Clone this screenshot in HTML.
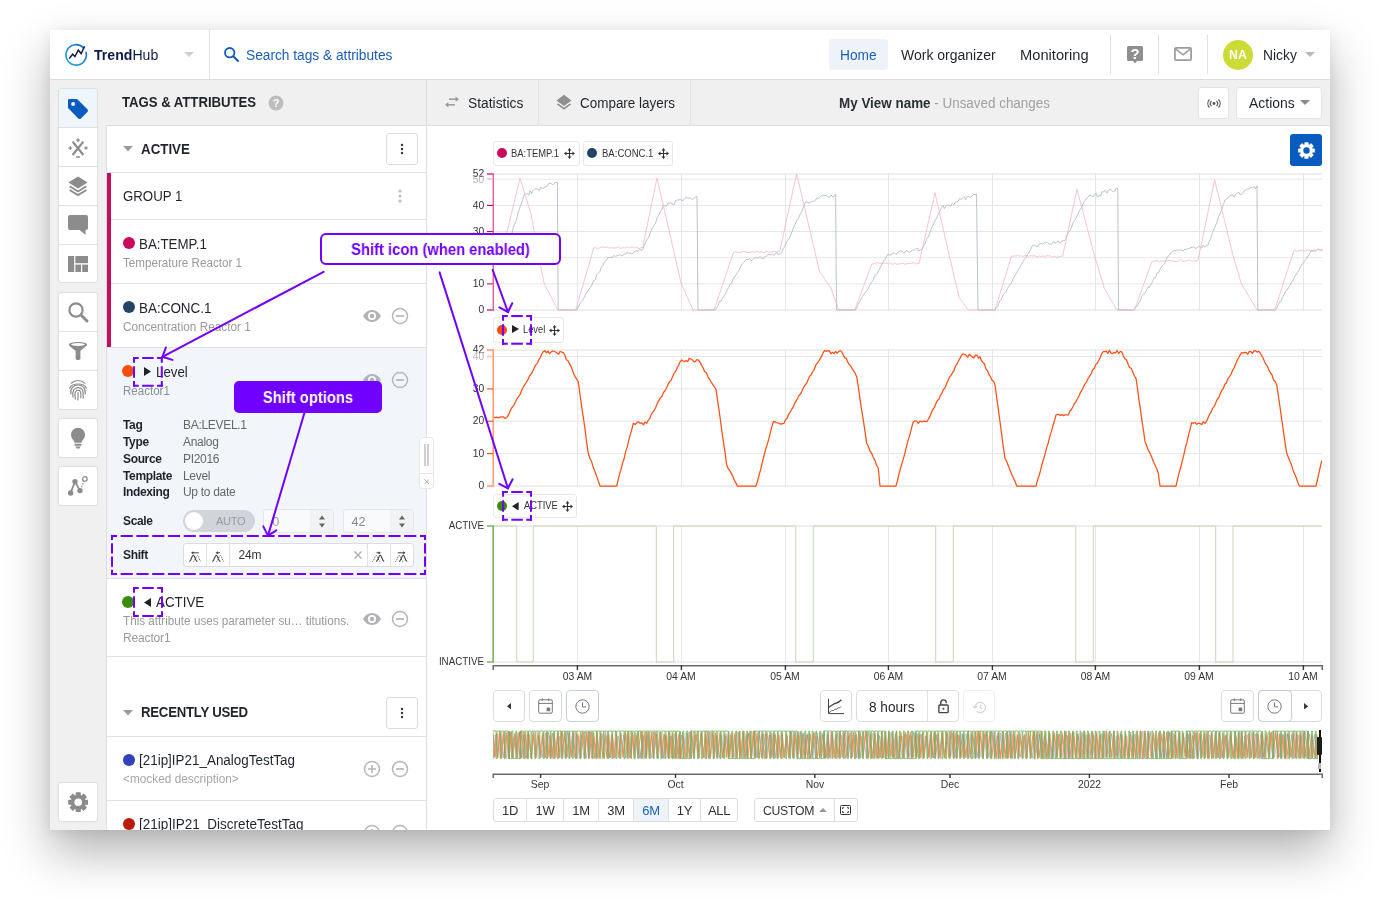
<!DOCTYPE html>
<html lang="en">
<head>
<meta charset="utf-8">
<title>TrendHub - Shift options</title>
<style>
*{box-sizing:border-box;margin:0;padding:0}
html,body{width:1380px;height:900px;overflow:hidden;background:#fff}
body{position:relative;font-family:"Liberation Sans",sans-serif;color:#1f242b;font-size:14px}
.abs{position:absolute}
.shadow{position:absolute;left:50px;top:30px;width:1280px;height:800px;background:#fff;box-shadow:0 22px 45px rgba(0,0,0,.30),0 2px 12px rgba(0,0,0,.07)}
.win{position:absolute;left:50px;top:30px;width:1280px;height:800px;overflow:hidden;background:#fff}
.in{position:absolute;left:-50px;top:-30px;width:1380px;height:900px;will-change:transform}
.t{position:absolute;white-space:nowrap;line-height:20px;height:20px}
.b{font-weight:bold}
.g{color:#999}
.box{position:absolute;background:#fff;border:1px solid #dcdcdc;border-radius:3px}
.ln{position:absolute;background:#e0e0e0}
.dot{position:absolute;width:12px;height:12px;border-radius:50%}
.sb{position:absolute;left:58px;width:40px;background:#fff;border:1px solid #dfdfdf;border-radius:3px}
.sbl{position:absolute;left:58px;width:40px;height:1px;background:#dfdfdf}
svg{display:block}
.ico{position:absolute}
.yl{position:absolute;white-space:nowrap;font-size:10.3px;line-height:12px;height:12px;text-align:right;width:60px;color:#333}
.xl{position:absolute;white-space:nowrap;font-size:10.4px;line-height:12px;height:12px;text-align:center;width:60px;color:#333}
.rb{position:absolute;top:798.8px;height:23px;line-height:23px;font-size:13px;text-align:center;color:#333;letter-spacing:-.3px}
</style>
</head>
<body>
<div class="shadow"></div>
<div class="win"><div class="in">
<!-- ===== top header ===== -->
<div class="abs" style="left:50px;top:30px;width:1280px;height:49px;background:#fff"></div>
<div class="ln" style="left:50px;top:79px;width:1280px;height:1px;background:#dcdcdc"></div>
<div class="ln" style="left:209px;top:30px;width:1px;height:49px;background:#e2e2e2"></div>
<svg class="ico" style="left:64px;top:42.5px" width="24" height="24" viewBox="0 0 24 24" fill="none">
 <defs><linearGradient id="lg" x1="0" y1="1" x2="1" y2="0"><stop offset="0" stop-color="#19a9dd"/><stop offset="1" stop-color="#1467c8"/></linearGradient></defs>
 <path d="M19.6 4.9A10.2 10.2 0 1 0 22 9.2" stroke="url(#lg)" stroke-width="1.6" stroke-linecap="round"/>
 <path d="M5.2 15.6L8.6 11.2L10.9 13.6L14.3 7.2L17.2 10.6L20.6 3.2" stroke="#151a4a" stroke-width="1.5" stroke-linejoin="miter"/>
</svg>
<div class="t" id="logo" style="left:94px;top:45px;font-size:15px;color:#0d1b4c;letter-spacing:0.00px;transform:scaleX(0.940);transform-origin:0 50%"><span class="b">Trend</span><span>Hub</span></div>
<svg class="ico" style="left:184px;top:52px" width="10" height="5" viewBox="0 0 10 5"><path d="M0 0H10L5 5Z" fill="#d0d0d0"/></svg>
<svg class="ico" style="left:223px;top:46px" width="17" height="17" viewBox="0 0 17 17" fill="none"><circle cx="6.7" cy="6.7" r="4.7" stroke="#0d5cb6" stroke-width="1.8"/><path d="M10.3 10.3L15 15" stroke="#0d5cb6" stroke-width="2" stroke-linecap="round"/></svg>
<div class="t" id="search" style="left:246px;top:45px;font-size:14px;color:#1b5fb5;letter-spacing:0.00px;transform:scaleX(0.980);transform-origin:0 50%">Search tags &amp; attributes</div>

<div class="abs" style="left:829px;top:39px;width:59px;height:31px;background:#eef3fa;border-radius:3px"></div>
<div class="t" id="nav1" style="left:840px;top:44.8px;font-size:14px;color:#1b5fb5;letter-spacing:0.00px;transform:scaleX(0.980);transform-origin:0 50%">Home</div>
<div class="t" id="nav2" style="left:901px;top:44.8px;font-size:14px;letter-spacing:0.00px;transform:scaleX(0.999);transform-origin:0 50%">Work organizer</div>
<div class="t" id="nav3" style="left:1020px;top:44.8px;font-size:14px;letter-spacing:0.00px;transform:scaleX(1.049);transform-origin:0 50%">Monitoring</div>
<div class="ln" style="left:1110px;top:35px;width:1px;height:39px"></div>
<div class="ln" style="left:1158px;top:35px;width:1px;height:39px"></div>
<div class="ln" style="left:1207px;top:35px;width:1px;height:39px"></div>
<!-- help icon -->
<svg class="ico" style="left:1127px;top:46px" width="16" height="18" viewBox="0 0 16 18"><path d="M1.5 0H14.5A1.5 1.5 0 0 1 16 1.5V13.5A1.5 1.5 0 0 1 14.5 15H10L8 17.5L6 15H1.5A1.5 1.5 0 0 1 0 13.5V1.5A1.5 1.5 0 0 1 1.5 0Z" fill="#8f8f8f"/><text x="8" y="13" font-family="Liberation Sans, sans-serif" font-weight="bold" font-size="15" fill="#fff" text-anchor="middle">?</text></svg>
<!-- mail icon -->
<svg class="ico" style="left:1174px;top:47px" width="18" height="14" viewBox="0 0 18 14" fill="none"><rect x=".9" y=".9" width="16.2" height="12.2" rx="1.2" stroke="#9a9a9a" stroke-width="1.7"/><path d="M1.5 1.8L9 7.8L16.5 1.8" stroke="#9a9a9a" stroke-width="1.6"/></svg>
<div class="abs" style="left:1223px;top:39.5px;width:30px;height:30px;border-radius:50%;background:#cddb37"></div>
<div class="t b" style="left:1223px;top:45px;width:30px;text-align:center;font-size:12.3px;color:#fff;letter-spacing:0">NA</div>
<div class="t" id="nicky" style="left:1263px;top:44.8px;font-size:14px;letter-spacing:0.00px;transform:scaleX(0.990);transform-origin:0 50%">Nicky</div>
<svg class="ico" style="left:1305px;top:52px" width="10" height="5" viewBox="0 0 10 5"><path d="M0 0H10L5 5Z" fill="#b8b8b8"/></svg>
<!-- ===== grey background for toolbar row + sidebar ===== -->
<div class="abs" style="left:50px;top:80px;width:1280px;height:46px;background:#f0f0f0"></div>
<div class="abs" style="left:50px;top:80px;width:57px;height:750px;background:#f0f0f0"></div>
<!-- sidebar groups -->
<div class="sb" style="top:88px;height:195px"></div>
<div class="abs" style="left:59px;top:89px;width:38px;height:38px;background:#eef5fb;border-radius:2px 2px 0 0"></div>
<div class="sbl" style="top:127px"></div><div class="sbl" style="top:166px"></div><div class="sbl" style="top:205px"></div><div class="sbl" style="top:244px"></div>
<!-- tag -->
<svg class="ico" style="left:67px;top:98px" width="22" height="22" viewBox="0 0 22 22"><path d="M2.2 1H9.3A1.8 1.8 0 0 1 10.6 1.55L20.4 11.3A1.8 1.8 0 0 1 20.4 13.9L13.9 20.4A1.8 1.8 0 0 1 11.3 20.4L1.55 10.6A1.8 1.8 0 0 1 1 9.3V2.2A1.2 1.2 0 0 1 2.2 1Z" fill="#0a5bbf" transform="rotate(0 11 11)"/><circle cx="6.1" cy="6.1" r="2" fill="#eef5fb"/></svg>
<!-- x star -->
<svg class="ico" style="left:67px;top:137px" width="22" height="22" viewBox="0 0 22 22" fill="none" stroke="#8c8c8c"><path d="M5.6 4.6L16.4 18M16.4 4.6L5.6 18" stroke-width="2.2"/><path d="M11 1.2V5M9.1 3.1H12.9M9 20H13M1.4 11.2H5.2M3.3 9.3V13.1M17.6 9.6L20.4 12.4M20.4 9.6L17.6 12.4" stroke-width="1.3"/></svg>
<!-- layers -->
<svg class="ico" style="left:67px;top:175px" width="22" height="22" viewBox="0 0 22 22"><path d="M11 1.6L20.6 7.6L11 13.6L1.4 7.6Z" fill="#8c8c8c"/><path d="M2.6 11.3L11 16.5L19.4 11.3M2.6 14.9L11 20.1L19.4 14.9" stroke="#8c8c8c" stroke-width="1.8" fill="none"/></svg>
<!-- comment -->
<svg class="ico" style="left:68px;top:215px" width="20" height="20" viewBox="0 0 20 20"><path d="M2 0H18A2 2 0 0 1 20 2V13A2 2 0 0 1 18 15H17.5V20L11.5 15H2A2 2 0 0 1 0 13V2A2 2 0 0 1 2 0Z" fill="#8c8c8c"/></svg>
<!-- dashboard -->
<svg class="ico" style="left:68px;top:256px" width="20" height="16" viewBox="0 0 20 16" fill="#8c8c8c"><rect x="0" y="0" width="6.2" height="16"/><rect x="7.4" y="0" width="12.6" height="7.2"/><rect x="7.4" y="8.6" width="5.6" height="7.4"/><rect x="14.2" y="8.6" width="5.8" height="7.4"/></svg>

<div class="sb" style="top:292px;height:118px"></div>
<div class="sbl" style="top:331px"></div><div class="sbl" style="top:370px"></div>
<!-- search -->
<svg class="ico" style="left:67px;top:301px" width="22" height="22" viewBox="0 0 22 22" fill="none"><circle cx="9" cy="9" r="6.6" stroke="#8c8c8c" stroke-width="2.2"/><path d="M14 14L20 20" stroke="#8c8c8c" stroke-width="3" stroke-linecap="round"/></svg>
<!-- funnel -->
<svg class="ico" style="left:68px;top:341px" width="20" height="20" viewBox="0 0 20 20"><path d="M1 3.6C1 1.9 5 .9 10 .9S19 1.9 19 3.6C19 5 17 6.2 12.4 10V17.6C12.4 18.6 11.6 19 10.8 19H9.2C8.4 19 7.6 18.6 7.6 17.6V10C3 6.2 1 5 1 3.6Z" fill="#8c8c8c"/><ellipse cx="10" cy="3.5" rx="6.8" ry="1.5" fill="#fff"/></svg>
<!-- fingerprint -->
<svg class="ico" style="left:68px;top:379px" width="20" height="22" viewBox="0 0 20 22" fill="none" stroke="#8c8c8c" stroke-width="1.2" stroke-linecap="round"><path d="M3.2 4.2C7 .6 13 .6 16.8 4.2"/><path d="M1.6 9.2C3.6 3.6 16.4 3.6 18.4 9.2"/><path d="M2.8 15C2 8.8 6 6 10 6S18 8.8 17.2 15"/><path d="M5 18C3.8 12 6.4 8.6 10 8.6S16 11.6 15 16.4"/><path d="M7.4 20C6 14.4 7.4 11.2 10 11.2S13.4 14 12.8 18.6"/><path d="M10 13.6C10.4 16.4 10.2 18.6 9.8 20.8"/><path d="M15 19.2C15.2 18.6 15.4 18 15.4 17.4"/></svg>

<div class="sb" style="top:418px;height:40px"></div>
<!-- bulb -->
<svg class="ico" style="left:70px;top:427px" width="16" height="22" viewBox="0 0 16 22" fill="#8c8c8c"><path d="M8 .8A7 7 0 0 0 1 7.8C1 10.6 2.6 12.2 3.6 13.6C4.2 14.4 4.4 15 4.4 15.8H11.6C11.6 15 11.8 14.4 12.4 13.6C13.4 12.2 15 10.6 15 7.8A7 7 0 0 0 8 .8Z"/><rect x="4.6" y="16.8" width="6.8" height="1.9" rx=".5"/><path d="M5.4 19.6H10.6L9.4 21.4H6.6Z"/></svg>
<div class="sb" style="top:466px;height:40px"></div>
<!-- graph -->
<svg class="ico" style="left:67px;top:475px" width="22" height="22" viewBox="0 0 22 22" fill="none"><path d="M3.6 18L8 6.6L13 15.6" stroke="#8c8c8c" stroke-width="1.8"/><path d="M13.4 15L17.4 5" stroke="#8c8c8c" stroke-width="1.3" stroke-dasharray="1.4 1.6"/><circle cx="3.6" cy="18" r="2.7" fill="#8c8c8c"/><circle cx="8" cy="6.6" r="2.7" fill="#8c8c8c"/><circle cx="13" cy="15.6" r="2.7" fill="#8c8c8c"/><circle cx="17.8" cy="4" r="2.3" stroke="#8c8c8c" stroke-width="1.3" fill="#fff"/></svg>

<div class="sb" style="top:782px;height:40px"></div>
<!-- gear -->
<svg class="ico" style="left:67.8px;top:791.8px" width="20.5" height="20.5" viewBox="-11 -11 22 22"><g fill="#8c8c8c"><circle r="8.1"/><rect x="-2.7" y="-10.8" width="5.4" height="21.6" rx=".8" transform="rotate(0)"/><rect x="-2.7" y="-10.8" width="5.4" height="21.6" rx=".8" transform="rotate(45)"/><rect x="-2.7" y="-10.8" width="5.4" height="21.6" rx=".8" transform="rotate(90)"/><rect x="-2.7" y="-10.8" width="5.4" height="21.6" rx=".8" transform="rotate(135)"/></g><circle r="4.1" fill="#fff"/></svg>
<!-- ===== tags panel ===== -->
<div class="t b" id="ta" style="left:122px;top:92px;font-size:14.7px;letter-spacing:-0.05px;transform:scaleX(0.900);transform-origin:0 50%">TAGS &amp; ATTRIBUTES</div>
<svg class="ico" style="left:268px;top:95px" width="16" height="16" viewBox="0 0 16 16"><circle cx="8" cy="8" r="7.5" fill="#bdbdbd"/><text x="8" y="12" font-family="Liberation Sans, sans-serif" font-weight="bold" font-size="11" fill="#fff" text-anchor="middle">?</text></svg>
<div class="abs" style="left:106px;top:125px;width:321px;height:710px;background:#fff;border:1px solid #dedede"></div>
<!-- ACTIVE header -->
<svg class="ico" style="left:123px;top:146px" width="10" height="6" viewBox="0 0 10 6"><path d="M0 0H10L5 5.5Z" fill="#9a9a9a"/></svg>
<div class="t b" id="h1" style="left:141px;top:139px;font-size:14.7px;letter-spacing:0.00px;transform:scaleX(0.908);transform-origin:0 50%">ACTIVE</div>
<div class="box" style="left:386px;top:133px;width:32px;height:32px"></div>
<svg class="ico" style="left:400px;top:143px" width="4" height="12" viewBox="0 0 4 12" fill="#333"><circle cx="2" cy="2" r="1.2"/><circle cx="2" cy="6" r="1.2"/><circle cx="2" cy="10" r="1.2"/></svg>
<div class="ln" style="left:107px;top:172px;width:319px;height:1px"></div>
<!-- group bar -->
<div class="abs" style="left:107px;top:173px;width:4px;height:175px;background:#c70d5e"></div>
<div class="t" id="g1" style="left:123px;top:186px;font-size:14.7px;letter-spacing:0.00px;transform:scaleX(0.902);transform-origin:0 50%">GROUP 1</div>
<svg class="ico" style="left:398px;top:189px" width="4" height="14" viewBox="0 0 4 14" fill="#bdbdbd"><circle cx="2" cy="2" r="1.5"/><circle cx="2" cy="7" r="1.5"/><circle cx="2" cy="12" r="1.5"/></svg>
<div class="ln" style="left:111px;top:219px;width:315px;height:1px"></div>
<!-- BA:TEMP.1 -->
<div class="dot" style="left:123px;top:237px;background:#c8095c"></div>
<div class="t" id="r1" style="left:139px;top:233.5px;font-size:14.7px;letter-spacing:0.00px;transform:scaleX(0.906);transform-origin:0 50%">BA:TEMP.1</div>
<div class="t g" id="r1s" style="left:123px;top:252.5px;font-size:12px;letter-spacing:0.00px;transform:scaleX(0.970);transform-origin:0 50%">Temperature Reactor 1</div>
<div class="ln" style="left:111px;top:283px;width:315px;height:1px"></div>
<!-- BA:CONC.1 -->
<div class="dot" style="left:123px;top:301px;background:#244466"></div>
<div class="t" id="r2" style="left:139px;top:297.5px;font-size:14.7px;letter-spacing:0.00px;transform:scaleX(0.916);transform-origin:0 50%">BA:CONC.1</div>
<div class="t g" id="r2s" style="left:123px;top:316.5px;font-size:12px;letter-spacing:0.00px;transform:scaleX(0.982);transform-origin:0 50%">Concentration Reactor 1</div>
<svg class="ico eye" style="left:363px;top:309px" width="18" height="14" viewBox="0 0 18 14"><path d="M9 1C4.8 1 1.6 4 0 7C1.6 10 4.8 13 9 13S16.4 10 18 7C16.4 4 13.2 1 9 1Z" fill="#b1b3b6"/><circle cx="9" cy="7" r="4" fill="#fff"/><circle cx="9" cy="7" r="2.3" fill="#b1b3b6"/></svg>
<svg class="ico" style="left:391px;top:307px" width="18" height="18" viewBox="0 0 18 18" fill="none" stroke="#b5b7ba" stroke-width="1.5"><circle cx="9" cy="9" r="7.5"/><path d="M5 9H13" stroke-width="1.8"/></svg>
<div class="ln" style="left:107px;top:347px;width:319px;height:1px"></div>
<!-- Level (expanded) -->
<div class="abs" style="left:107px;top:348px;width:319px;height:230px;background:#f2f6fb"></div>
<div class="dot" style="left:122px;top:365px;background:#fb4c0f"></div>
<div class="abs" style="left:134px;top:358px;width:28px;height:27px;background:#f2f6fb"></div>
<svg class="ico" style="left:144px;top:367px" width="7" height="9" viewBox="0 0 7 9"><path d="M0 0L7 4.5L0 9Z" fill="#222"/></svg>
<div class="t" id="r3" style="left:155.5px;top:361.5px;font-size:14px;letter-spacing:0.00px;transform:scaleX(0.950);transform-origin:0 50%">Level</div>
<div class="t" id="r3s" style="left:123px;top:380.5px;font-size:12px;color:#8a8f98;letter-spacing:0.00px;transform:scaleX(0.961);transform-origin:0 50%">Reactor1</div>
<svg class="ico eye" style="left:363px;top:373px" width="18" height="14" viewBox="0 0 18 14"><path d="M9 1C4.8 1 1.6 4 0 7C1.6 10 4.8 13 9 13S16.4 10 18 7C16.4 4 13.2 1 9 1Z" fill="#b1b3b6"/><circle cx="9" cy="7" r="4" fill="#f2f6fb"/><circle cx="9" cy="7" r="2.3" fill="#b1b3b6"/></svg>
<svg class="ico" style="left:391px;top:371px" width="18" height="18" viewBox="0 0 18 18" fill="none" stroke="#b5b7ba" stroke-width="1.5"><circle cx="9" cy="9" r="7.5"/><path d="M5 9H13" stroke-width="1.8"/></svg>

<div class="t b kv" style="left:123px;top:415px;font-size:12px;letter-spacing:-.35px">Tag</div><div class="t kv" style="left:183px;top:415px;font-size:12px;color:#666;letter-spacing:-.3px">BA:LEVEL.1</div>
<div class="t b kv" style="left:123px;top:432px;font-size:12px;letter-spacing:-.35px">Type</div><div class="t kv" style="left:183px;top:432px;font-size:12px;color:#666;letter-spacing:-.3px">Analog</div>
<div class="t b kv" style="left:123px;top:449px;font-size:12px;letter-spacing:-.35px">Source</div><div class="t kv" style="left:183px;top:449px;font-size:12px;color:#666;letter-spacing:-.3px">PI2016</div>
<div class="t b kv" style="left:123px;top:466px;font-size:12px;letter-spacing:-.35px">Template</div><div class="t kv" style="left:183px;top:466px;font-size:12px;color:#666;letter-spacing:-.3px">Level</div>
<div class="t b kv" style="left:123px;top:482px;font-size:12px;letter-spacing:-.35px">Indexing</div><div class="t kv" style="left:183px;top:482px;font-size:12px;color:#666;letter-spacing:-.3px">Up to date</div>

<div class="t b" style="left:123px;top:511px;font-size:12px;letter-spacing:-.35px">Scale</div>
<div class="abs" style="left:183px;top:509.5px;width:72px;height:22.4px;border-radius:11.2px;background:#d1d4db"></div>
<div class="abs" style="left:185.2px;top:511.7px;width:18px;height:18px;border-radius:50%;background:#fff"></div>
<div class="t" style="left:216px;top:511px;font-size:11px;color:#9a9a9a;letter-spacing:-.3px">AUTO</div>
<div class="abs" style="left:263.3px;top:509.2px;width:70.7px;height:23.4px;background:#f9fafb;border:1px solid #e6e7ea;border-radius:3px"></div>
<div class="abs" style="left:310px;top:510.2px;width:23px;height:21.4px;background:#f1f2f4"></div>
<div class="t" style="left:272.3px;top:512px;font-size:12.6px;color:#999">0</div>
<svg class="ico" style="left:318.5px;top:514.5px" width="6" height="13" viewBox="0 0 7 14" fill="#666"><path d="M3.5 0L7 4.6H0Z"/><path d="M3.5 14L7 9.4H0Z"/></svg>
<div class="abs" style="left:343px;top:509.2px;width:71px;height:23.4px;background:#f9fafb;border:1px solid #e6e7ea;border-radius:3px"></div>
<div class="abs" style="left:390px;top:510.2px;width:23px;height:21.4px;background:#f1f2f4"></div>
<div class="t" style="left:351.5px;top:512px;font-size:12.6px;color:#888;letter-spacing:-.1px">42</div>
<svg class="ico" style="left:398.5px;top:514.5px" width="6" height="13" viewBox="0 0 7 14" fill="#666"><path d="M3.5 0L7 4.6H0Z"/><path d="M3.5 14L7 9.4H0Z"/></svg>

<div class="t b" style="left:123px;top:545px;font-size:12px;letter-spacing:-.35px">Shift</div>
<div class="box" style="left:183px;top:543px;width:231px;height:24px;border-color:#dcdde0"></div>
<div class="ln" style="left:206px;top:544px;width:1px;height:22px"></div>
<div class="ln" style="left:229px;top:544px;width:1px;height:22px"></div>
<div class="ln" style="left:367px;top:544px;width:1px;height:22px"></div>
<div class="ln" style="left:390px;top:544px;width:1px;height:22px"></div>
<div class="t" style="left:238.5px;top:545px;font-size:12px;color:#333;letter-spacing:-.2px">24m</div>
<svg class="ico" style="left:354.4px;top:550.8px" width="8" height="8" viewBox="0 0 8 8" stroke="#b0b0b0" stroke-width="1.4"><path d="M.4 .4L7.6 7.6M7.6 .4L.4 7.6"/></svg>
<!-- shift icons -->
<svg class="ico" style="left:188.7px;top:550.6px" width="12.5" height="11" viewBox="0 0 12.5 11" fill="none" stroke="#444"><path d="M.3 10.4C2.4 10.4 2.5 4.4 4.3 4.4S6.2 10.4 8.4 10.4" stroke-width="1.15"/><path d="M4.4 10.4C6.4 10.4 6.6 4.6 8.3 4.6S10.3 10.4 12.2 10.4" stroke-width="1" stroke-dasharray="1.1 1.1"/><path d="M3 1.8H9.8" stroke-width="1"/><path d="M2 1.8L4.4 .2V3.4Z" fill="#444" stroke="none"/></svg>
<svg class="ico" style="left:211.8px;top:550.6px" width="12.5" height="11" viewBox="0 0 12.5 11" fill="none" stroke="#444"><path d="M.3 10.4C2.4 10.4 2.5 4.4 4.3 4.4S6.2 10.4 8.4 10.4" stroke-width="1.15"/><path d="M4.4 10.4C6.4 10.4 6.6 4.6 8.3 4.6S10.3 10.4 12.2 10.4" stroke-width="1" stroke-dasharray="1.1 1.1"/><path d="M5 1.8H8" stroke-width="1"/><path d="M3.6 1.8L6 .2V3.4Z" fill="#444" stroke="none"/></svg>
<svg class="ico" style="left:372.4px;top:550.6px" width="12.5" height="11" viewBox="0 0 12.5 11" fill="none" stroke="#444"><g transform="translate(12.5 0) scale(-1 1)"><path d="M.3 10.4C2.4 10.4 2.5 4.4 4.3 4.4S6.2 10.4 8.4 10.4" stroke-width="1.15"/><path d="M4.4 10.4C6.4 10.4 6.6 4.6 8.3 4.6S10.3 10.4 12.2 10.4" stroke-width="1" stroke-dasharray="1.1 1.1"/><path d="M5 1.8H8" stroke-width="1"/><path d="M3.6 1.8L6 .2V3.4Z" fill="#444" stroke="none"/></g></svg>
<svg class="ico" style="left:395.3px;top:550.6px" width="12.5" height="11" viewBox="0 0 12.5 11" fill="none" stroke="#444"><g transform="translate(12.5 0) scale(-1 1)"><path d="M.3 10.4C2.4 10.4 2.5 4.4 4.3 4.4S6.2 10.4 8.4 10.4" stroke-width="1.15"/><path d="M4.4 10.4C6.4 10.4 6.6 4.6 8.3 4.6S10.3 10.4 12.2 10.4" stroke-width="1" stroke-dasharray="1.1 1.1"/><path d="M3 1.8H9.8" stroke-width="1"/><path d="M2 1.8L4.4 .2V3.4Z" fill="#444" stroke="none"/></g></svg>
<div class="ln" style="left:107px;top:578px;width:319px;height:1px"></div>

<!-- ACTIVE attr row -->
<div class="dot" style="left:122px;top:596px;background:#3a8d0b"></div>
<div class="abs" style="left:134px;top:588px;width:28px;height:28px;background:#fff"></div>
<svg class="ico" style="left:144px;top:597.5px" width="7" height="9" viewBox="0 0 7 9"><path d="M7 0L0 4.5L7 9Z" fill="#222"/></svg>
<div class="t" id="r4" style="left:155.5px;top:592px;font-size:14.7px;letter-spacing:0.00px;transform:scaleX(0.910);transform-origin:0 50%">ACTIVE</div>
<div class="t g" id="r4s" style="left:123px;top:611px;font-size:12px;letter-spacing:0.00px;transform:scaleX(0.975);transform-origin:0 50%">This attribute uses parameter su… titutions.</div>
<div class="t g" style="left:123px;top:627.5px;font-size:12px;letter-spacing:-.15px">Reactor1</div>
<svg class="ico eye" style="left:363px;top:612px" width="18" height="14" viewBox="0 0 18 14"><path d="M9 1C4.8 1 1.6 4 0 7C1.6 10 4.8 13 9 13S16.4 10 18 7C16.4 4 13.2 1 9 1Z" fill="#b1b3b6"/><circle cx="9" cy="7" r="4" fill="#fff"/><circle cx="9" cy="7" r="2.3" fill="#b1b3b6"/></svg>
<svg class="ico" style="left:391px;top:610px" width="18" height="18" viewBox="0 0 18 18" fill="none" stroke="#b5b7ba" stroke-width="1.5"><circle cx="9" cy="9" r="7.5"/><path d="M5 9H13" stroke-width="1.8"/></svg>
<div class="ln" style="left:107px;top:656px;width:319px;height:1px"></div>

<!-- RECENTLY USED -->
<svg class="ico" style="left:123px;top:710px" width="10" height="6" viewBox="0 0 10 6"><path d="M0 0H10L5 5.5Z" fill="#9a9a9a"/></svg>
<div class="t b" id="h2" style="left:141px;top:702px;font-size:14.7px;letter-spacing:-0.28px;transform:scaleX(0.900);transform-origin:0 50%">RECENTLY USED</div>
<div class="box" style="left:386px;top:697px;width:32px;height:32px"></div>
<svg class="ico" style="left:400px;top:707px" width="4" height="12" viewBox="0 0 4 12" fill="#333"><circle cx="2" cy="2" r="1.2"/><circle cx="2" cy="6" r="1.2"/><circle cx="2" cy="10" r="1.2"/></svg>
<div class="ln" style="left:107px;top:736px;width:319px;height:1px"></div>
<div class="dot" style="left:123px;top:754.2px;background:#3341b8"></div>
<div class="t" id="r5" style="left:139px;top:749.8px;font-size:14px;letter-spacing:0.00px;transform:scaleX(0.959);transform-origin:0 50%">[21ip]IP21_AnalogTestTag</div>
<div class="t g" id="r5s" style="left:123px;top:769px;font-size:12px;color:#a6a6a6;letter-spacing:0.00px;transform:scaleX(0.986);transform-origin:0 50%">&lt;mocked description&gt;</div>
<svg class="ico" style="left:363px;top:760px" width="18" height="18" viewBox="0 0 18 18" fill="none" stroke="#b5b7ba" stroke-width="1.5"><circle cx="9" cy="9" r="7.5"/><path d="M5 9H13M9 5V13" stroke-width="1.6"/></svg>
<svg class="ico" style="left:391px;top:760px" width="18" height="18" viewBox="0 0 18 18" fill="none" stroke="#b5b7ba" stroke-width="1.5"><circle cx="9" cy="9" r="7.5"/><path d="M5 9H13" stroke-width="1.8"/></svg>
<div class="ln" style="left:107px;top:800px;width:319px;height:1px"></div>
<div class="dot" style="left:123px;top:818px;background:#b81c0c"></div>
<div class="t" id="r6" style="left:139px;top:813.8px;font-size:14px;letter-spacing:0.00px;transform:scaleX(0.965);transform-origin:0 50%">[21ip]IP21_DiscreteTestTag</div>
<svg class="ico" style="left:363px;top:824px" width="18" height="18" viewBox="0 0 18 18" fill="none" stroke="#b5b7ba" stroke-width="1.5"><circle cx="9" cy="9" r="7.5"/><path d="M5 9H13M9 5V13" stroke-width="1.6"/></svg>
<svg class="ico" style="left:391px;top:824px" width="18" height="18" viewBox="0 0 18 18" fill="none" stroke="#b5b7ba" stroke-width="1.5"><circle cx="9" cy="9" r="7.5"/><path d="M5 9H13" stroke-width="1.8"/></svg>

<!-- ===== chart toolbar ===== -->
<div class="ln" style="left:107px;top:125px;width:1223px;height:1px;background:#dedede"></div>
<div class="ln" style="left:426px;top:80px;width:1px;height:750px;background:#dedede"></div>
<div class="ln" style="left:538px;top:80px;width:1px;height:45px;background:#e2e2e2"></div>
<div class="ln" style="left:690px;top:80px;width:1px;height:45px;background:#e2e2e2"></div>
<svg class="ico" style="left:444px;top:96px" width="16" height="12" viewBox="0 0 16 12" fill="none" stroke="#9a9a9a" stroke-width="1.5"><path d="M5 3.2H12.4"/><path d="M15 3.2L11.6 .6V5.8Z" fill="#9a9a9a" stroke="none"/><path d="M11 8.8H3.6"/><path d="M1 8.8L4.4 6.2V11.4Z" fill="#9a9a9a" stroke="none"/></svg>
<div class="t" id="st" style="left:468px;top:92.6px;font-size:14px;letter-spacing:0.00px;transform:scaleX(0.987);transform-origin:0 50%">Statistics</div>
<svg class="ico" style="left:555.5px;top:93.5px" width="16" height="16.5" viewBox="0 0 20 20.6"><path d="M10 1L19.4 8L10 15L.6 8Z" fill="#8f8f8f"/><path d="M1.8 12.2L10 18.4L18.2 12.2" stroke="#8f8f8f" stroke-width="2" fill="none"/></svg>
<div class="t" id="cl" style="left:580px;top:92.6px;font-size:14px;letter-spacing:0.00px;transform:scaleX(0.961);transform-origin:0 50%">Compare layers</div>
<div class="t" id="vn" style="left:839px;top:92.5px;font-size:14px;letter-spacing:0.00px;transform:scaleX(0.959);transform-origin:0 50%"><span class="b" style="color:#2a2f36">My View name</span><span style="color:#a0a0a0"> - Unsaved changes</span></div>
<div class="box" style="left:1198px;top:87px;width:31px;height:32px;border-color:#e4e4e4"></div>
<svg class="ico" style="left:1206.5px;top:97.5px" width="14" height="11.2" viewBox="0 0 15 12" fill="none" stroke="#555" stroke-width="1.25"><circle cx="7.5" cy="6" r="1.6" fill="#555" stroke="none"/><path d="M4.8 3.2A4 4 0 0 0 4.8 8.8M10.2 3.2A4 4 0 0 1 10.2 8.8M2.6 1.6A6.6 6.6 0 0 0 2.6 10.4M12.4 1.6A6.6 6.6 0 0 1 12.4 10.4"/></svg>
<div class="box" style="left:1236px;top:87px;width:86px;height:32px;border-color:#e4e4e4"></div>
<div class="t" id="ac" style="left:1249px;top:93px;font-size:14px;letter-spacing:0.00px;transform:scaleX(0.995);transform-origin:0 50%">Actions</div>
<svg class="ico" style="left:1300px;top:100px" width="10" height="5" viewBox="0 0 10 5"><path d="M0 0H10L5 5Z" fill="#8a8a8a"/></svg>
<div class="abs" style="left:1290px;top:134px;width:32px;height:32px;background:#0a5bbf;border-radius:3px"></div>
<svg class="ico" style="left:1297.5px;top:141.5px" width="17" height="17" viewBox="-11 -11 22 22"><g fill="#fff"><circle r="8.1"/><rect x="-2.7" y="-10.8" width="5.4" height="21.6" rx=".8" transform="rotate(0)"/><rect x="-2.7" y="-10.8" width="5.4" height="21.6" rx=".8" transform="rotate(45)"/><rect x="-2.7" y="-10.8" width="5.4" height="21.6" rx=".8" transform="rotate(90)"/><rect x="-2.7" y="-10.8" width="5.4" height="21.6" rx=".8" transform="rotate(135)"/></g><circle r="4.1" fill="#0a5bbf"/></svg>

<svg class="abs" style="left:0;top:0" width="1380" height="900" viewBox="0 0 1380 900" fill="none">
<line x1="493" x2="1322" y1="174" y2="174" stroke="#efefef" stroke-width="2"/>
<line x1="493" x2="1322" y1="310" y2="310" stroke="#efefef" stroke-width="2"/>
<line x1="493" x2="1322" y1="179.2" y2="179.2" stroke="#e6e6e8"/>
<line x1="493" x2="1322" y1="205.4" y2="205.4" stroke="#e6e6e8"/>
<line x1="493" x2="1322" y1="231.5" y2="231.5" stroke="#e6e6e8"/>
<line x1="493" x2="1322" y1="257.7" y2="257.7" stroke="#e6e6e8"/>
<line x1="493" x2="1322" y1="283.8" y2="283.8" stroke="#e6e6e8"/>
<line x1="493" x2="1322" y1="350" y2="350" stroke="#efefef" stroke-width="2"/>
<line x1="493" x2="1322" y1="486" y2="486" stroke="#efefef" stroke-width="2"/>
<line x1="493" x2="1322" y1="356.5" y2="356.5" stroke="#e6e6e8"/>
<line x1="493" x2="1322" y1="388.9" y2="388.9" stroke="#e6e6e8"/>
<line x1="493" x2="1322" y1="421.2" y2="421.2" stroke="#e6e6e8"/>
<line x1="493" x2="1322" y1="453.6" y2="453.6" stroke="#e6e6e8"/>
<line x1="493" x2="1322" y1="526" y2="526" stroke="#efefef" stroke-width="2"/>
<line x1="493" x2="1322" y1="662" y2="662" stroke="#efefef" stroke-width="2"/>
<line x1="577.5" x2="577.5" y1="173" y2="311" stroke="#e6e6e8"/>
<line x1="577.5" x2="577.5" y1="349" y2="487" stroke="#e6e6e8"/>
<line x1="577.5" x2="577.5" y1="525" y2="663" stroke="#e6e6e8"/>
<line x1="681.5" x2="681.5" y1="173" y2="311" stroke="#e6e6e8"/>
<line x1="681.5" x2="681.5" y1="349" y2="487" stroke="#e6e6e8"/>
<line x1="681.5" x2="681.5" y1="525" y2="663" stroke="#e6e6e8"/>
<line x1="785.5" x2="785.5" y1="173" y2="311" stroke="#e6e6e8"/>
<line x1="785.5" x2="785.5" y1="349" y2="487" stroke="#e6e6e8"/>
<line x1="785.5" x2="785.5" y1="525" y2="663" stroke="#e6e6e8"/>
<line x1="888.5" x2="888.5" y1="173" y2="311" stroke="#e6e6e8"/>
<line x1="888.5" x2="888.5" y1="349" y2="487" stroke="#e6e6e8"/>
<line x1="888.5" x2="888.5" y1="525" y2="663" stroke="#e6e6e8"/>
<line x1="992.5" x2="992.5" y1="173" y2="311" stroke="#e6e6e8"/>
<line x1="992.5" x2="992.5" y1="349" y2="487" stroke="#e6e6e8"/>
<line x1="992.5" x2="992.5" y1="525" y2="663" stroke="#e6e6e8"/>
<line x1="1095.5" x2="1095.5" y1="173" y2="311" stroke="#e6e6e8"/>
<line x1="1095.5" x2="1095.5" y1="349" y2="487" stroke="#e6e6e8"/>
<line x1="1095.5" x2="1095.5" y1="525" y2="663" stroke="#e6e6e8"/>
<line x1="1199.5" x2="1199.5" y1="173" y2="311" stroke="#e6e6e8"/>
<line x1="1199.5" x2="1199.5" y1="349" y2="487" stroke="#e6e6e8"/>
<line x1="1199.5" x2="1199.5" y1="525" y2="663" stroke="#e6e6e8"/>
<line x1="1303.5" x2="1303.5" y1="173" y2="311" stroke="#e6e6e8"/>
<line x1="1303.5" x2="1303.5" y1="349" y2="487" stroke="#e6e6e8"/>
<line x1="1303.5" x2="1303.5" y1="525" y2="663" stroke="#e6e6e8"/>
<path d="M493.0 262.0L494.6 259.1L496.2 256.2L497.8 255.2L499.3 251.1L500.9 250.0L502.5 247.1L504.1 243.8L505.7 242.7L507.2 239.0L508.8 237.6L510.4 234.2L512.0 233.0L513.5 227.1L515.0 223.2L516.5 219.6L518.0 212.8L519.5 208.4L521.0 204.7L522.5 200.8L524.0 194.8L525.5 194.6L527.0 193.2L528.6 195.3L530.1 190.5L531.6 193.7L533.1 190.5L534.6 189.3L536.1 188.6L537.7 188.9L539.2 190.7L540.7 187.2L542.2 188.5L543.7 188.2L545.3 186.4L546.8 186.7L548.3 183.9L549.8 183.3L551.3 183.5L552.8 185.1L554.4 183.4L555.9 182.3L557.4 182.6L558.2 310.0L559.7 310.0L561.2 310.0L562.8 310.0L564.3 310.0L565.8 310.0L567.4 310.0L568.9 310.0L570.4 310.0L571.9 310.0L573.5 310.0L575.0 310.0L576.5 310.0L578.1 307.6L579.6 304.6L581.2 301.5L582.8 300.3L584.3 297.4L585.9 293.5L587.5 291.8L589.0 289.0L590.6 287.4L592.1 284.3L593.7 280.5L595.3 279.8L596.8 274.7L598.4 273.0L600.0 271.3L601.5 266.9L603.1 265.3L604.7 261.4L606.2 260.5L607.8 257.4L609.3 257.9L610.8 257.0L612.3 257.6L613.9 255.5L615.4 256.4L616.9 255.8L618.4 255.4L619.9 254.7L621.4 255.6L622.9 255.6L624.4 253.8L626.0 254.1L627.5 251.8L629.0 253.5L630.5 253.0L632.0 253.8L633.5 253.0L635.0 250.9L636.5 250.9L638.1 251.5L639.6 249.1L641.1 250.2L642.6 250.0L644.2 245.6L645.8 242.0L647.4 238.4L649.0 236.9L650.6 231.7L652.2 228.5L653.9 225.5L655.5 223.3L657.1 217.7L658.7 215.2L660.3 212.1L661.9 209.5L663.5 205.0L665.0 206.1L666.5 205.9L668.1 202.8L669.6 203.1L671.1 202.4L672.6 204.4L674.2 204.4L675.7 200.3L677.2 200.0L678.7 199.9L680.2 199.5L681.8 200.3L683.3 200.4L684.8 198.5L686.3 196.9L687.9 198.4L689.4 197.8L690.9 198.4L692.4 199.7L694.0 198.1L695.5 197.0L697.0 196.5L698.0 310.0L699.5 310.0L701.1 310.0L702.6 310.0L704.2 310.0L705.7 310.0L707.3 310.0L708.8 310.0L710.4 310.0L711.9 310.0L713.5 310.0L715.0 310.0L716.5 307.9L718.0 305.6L719.5 301.4L721.0 301.3L722.5 298.5L724.0 296.3L725.5 293.7L727.0 290.1L728.5 287.7L730.0 284.4L731.5 283.4L733.0 279.4L734.5 276.9L736.0 274.9L737.5 272.3L739.0 270.4L740.5 267.1L742.0 264.5L743.5 262.5L745.0 261.0L746.5 259.4L748.1 259.9L749.6 258.5L751.1 260.9L752.6 259.7L754.2 257.9L755.7 257.9L757.2 257.8L758.8 257.6L760.3 256.5L761.8 258.4L763.4 258.6L764.9 256.6L766.4 256.3L767.9 254.7L769.5 254.4L771.0 254.8L772.5 254.2L774.1 255.7L775.6 253.2L777.1 252.5L778.6 255.1L780.2 253.4L781.7 253.0L783.2 248.8L784.7 246.7L786.3 242.1L787.8 240.3L789.3 238.3L790.8 234.8L792.3 231.1L793.9 226.7L795.4 223.8L796.9 220.0L798.4 218.5L799.9 214.6L801.4 212.1L803.0 207.6L804.5 204.1L806.0 201.7L807.6 202.7L809.1 203.1L810.7 202.1L812.2 201.5L813.8 201.1L815.3 200.4L816.9 197.6L818.5 198.5L820.0 197.4L821.6 195.5L823.1 195.1L824.7 195.8L826.3 195.3L827.8 196.9L829.4 197.7L830.9 195.0L832.5 196.8L834.0 196.7L835.6 194.0L836.5 310.0L838.0 310.0L839.6 310.0L841.1 310.0L842.7 310.0L844.2 310.0L845.8 310.0L847.3 310.0L848.8 310.0L850.4 310.0L851.9 310.0L853.5 310.0L855.0 310.0L856.5 308.7L858.0 304.5L859.5 301.6L861.0 299.1L862.5 296.4L864.0 293.9L865.5 292.5L867.0 290.8L868.5 288.0L870.0 284.5L871.5 282.4L873.0 280.3L874.5 275.7L876.0 274.8L877.5 273.0L879.0 270.1L880.5 267.4L882.0 264.1L883.5 260.7L885.0 259.9L886.5 256.1L888.0 254.0L889.5 254.7L891.1 255.1L892.6 253.0L894.2 252.8L895.7 254.3L897.3 253.4L898.8 251.4L900.4 251.0L901.9 250.8L903.5 253.0L905.0 252.5L906.5 250.1L908.1 252.1L909.6 252.4L911.2 251.1L912.7 249.9L914.3 250.3L915.8 248.7L917.4 248.1L918.9 251.0L920.5 249.7L922.0 249.0L923.5 245.9L925.0 243.9L926.5 239.3L928.0 237.4L929.5 234.1L931.0 229.2L932.5 226.1L934.0 223.1L935.5 219.8L937.0 217.5L938.5 213.5L940.0 210.7L941.5 207.8L943.0 205.5L944.5 208.5L946.1 205.3L947.6 205.2L949.1 205.2L950.6 206.1L952.2 203.2L953.7 204.9L955.2 202.4L956.7 201.9L958.2 201.3L959.8 198.4L961.3 199.7L962.8 197.9L964.3 196.5L965.8 199.6L967.4 196.1L968.9 196.9L970.4 197.4L971.9 196.1L973.5 194.4L975.0 194.7L976.5 194.0L978.0 310.0L979.5 310.0L981.1 310.0L982.6 310.0L984.2 310.0L985.7 310.0L987.3 310.0L988.8 310.0L990.4 310.0L991.9 310.0L993.5 310.0L995.0 310.0L996.5 307.5L998.1 305.5L999.6 300.9L1001.2 299.5L1002.7 296.0L1004.2 293.4L1005.8 292.1L1007.3 288.7L1008.9 286.2L1010.4 284.1L1012.0 281.8L1013.5 277.8L1015.0 275.6L1016.6 272.7L1018.1 270.0L1019.7 267.9L1021.2 264.5L1022.8 262.1L1024.3 259.3L1025.8 257.9L1027.4 254.6L1028.9 252.4L1030.5 249.9L1032.0 246.0L1033.5 245.0L1035.0 245.7L1036.6 246.7L1038.1 246.1L1039.6 243.6L1041.1 243.4L1042.7 244.1L1044.2 242.7L1045.7 243.0L1047.2 242.3L1048.8 243.9L1050.3 244.1L1051.8 244.2L1053.3 241.6L1054.9 243.1L1056.4 242.7L1057.9 240.8L1059.4 242.9L1061.0 243.0L1062.5 240.3L1064.0 241.0L1065.5 239.4L1067.0 235.0L1068.5 232.4L1070.0 230.9L1071.5 227.6L1073.0 222.9L1074.5 220.7L1076.0 218.1L1077.5 214.7L1079.0 211.5L1080.5 209.0L1082.0 207.2L1083.5 202.4L1085.0 201.0L1086.5 198.0L1088.1 197.3L1089.6 194.9L1091.2 195.8L1092.8 196.7L1094.3 195.7L1095.9 193.2L1097.5 197.0L1099.0 195.6L1100.6 196.0L1102.2 191.5L1103.7 191.8L1105.3 190.3L1106.8 193.2L1108.4 190.4L1110.0 189.3L1111.5 190.2L1113.1 192.0L1114.7 191.1L1116.2 188.1L1117.8 188.7L1118.5 310.0L1120.0 310.0L1121.6 310.0L1123.2 310.0L1124.7 310.0L1126.2 310.0L1127.8 310.0L1129.3 310.0L1130.9 310.0L1132.5 310.0L1134.0 310.0L1135.5 306.6L1137.1 306.4L1138.6 303.0L1140.2 301.0L1141.7 296.9L1143.2 294.4L1144.8 293.8L1146.3 290.6L1147.9 287.2L1149.4 287.3L1151.0 284.0L1152.5 282.1L1154.0 277.7L1155.6 277.5L1157.1 272.8L1158.7 272.7L1160.2 269.1L1161.8 266.4L1163.3 264.6L1164.8 263.3L1166.4 259.0L1167.9 256.3L1169.5 255.0L1171.0 252.5L1172.5 251.4L1174.1 250.7L1175.6 250.5L1177.1 249.9L1178.6 250.1L1180.2 250.1L1181.7 249.8L1183.2 251.0L1184.8 249.2L1186.3 249.6L1187.8 248.3L1189.3 248.5L1190.9 247.2L1192.4 247.6L1193.9 246.6L1195.5 248.6L1197.0 247.7L1198.5 246.3L1200.1 246.9L1201.6 248.1L1203.1 245.1L1204.6 247.1L1206.2 245.6L1207.7 245.5L1209.3 241.3L1210.8 238.2L1212.4 232.8L1214.0 229.0L1215.6 225.3L1217.1 222.0L1218.7 216.1L1220.3 213.3L1221.9 208.9L1223.4 204.5L1225.0 200.0L1226.5 198.9L1228.0 198.0L1229.6 196.0L1231.1 195.6L1232.6 194.7L1234.1 197.1L1235.7 194.2L1237.2 193.1L1238.7 192.1L1240.2 194.9L1241.8 194.4L1243.3 192.8L1244.8 190.3L1246.3 189.5L1247.9 189.0L1249.4 189.1L1250.9 187.1L1252.4 187.8L1254.0 186.2L1255.5 188.8L1257.0 186.0L1257.8 310.0L1259.4 310.0L1260.9 310.0L1262.5 310.0L1264.1 310.0L1265.6 310.0L1267.2 310.0L1268.7 310.0L1270.3 310.0L1271.9 310.0L1273.4 310.0L1275.0 310.0L1276.5 308.9L1278.0 305.2L1279.5 301.9L1281.0 301.5L1282.5 297.2L1284.0 294.8L1285.5 291.4L1287.0 290.0L1288.5 287.8L1290.0 285.4L1291.5 282.1L1293.0 280.5L1294.5 276.7L1296.0 274.9L1297.5 272.0L1299.0 270.4L1300.5 266.9L1302.0 264.4L1303.5 262.7L1305.0 260.1L1306.5 258.6L1308.0 256.0L1309.5 254.2L1311.0 251.0L1312.6 251.2L1314.1 251.1L1315.7 251.4L1317.3 249.5L1318.9 249.0L1320.4 250.8L1322.0 249.0" stroke="#a3afc0" stroke-width="0.75"/>
<path d="M493.0 258.0L494.6 255.1L496.1 252.2L497.7 249.3L499.2 246.4L500.8 243.6L502.3 240.7L503.9 237.8L505.4 234.9L507.0 232.0L508.6 225.3L510.2 218.6L511.9 211.8L513.5 205.1L515.1 198.4L516.8 191.6L518.4 184.9L520.0 178.2L521.6 183.3L523.1 188.4L524.7 193.5L526.3 198.7L527.9 203.8L529.4 208.9L531.0 214.0L532.6 222.3L534.2 231.4L535.9 240.0L537.5 248.1L539.1 257.4L540.8 266.1L542.4 274.5L544.0 283.0L545.6 286.2L547.1 289.2L548.7 291.7L550.2 295.0L551.8 298.0L553.3 301.3L554.9 304.2L556.4 307.3L558.0 310.0L559.6 310.0L561.2 310.0L562.8 310.0L564.4 310.0L566.0 310.0L567.7 310.0L569.3 310.0L570.9 310.0L572.5 310.0L574.1 310.0L575.7 310.0L577.2 304.8L578.7 299.6L580.2 294.4L581.7 289.2L583.2 284.0L584.8 278.9L586.3 273.7L587.8 268.5L589.3 263.3L590.8 258.1L592.3 252.9L593.8 247.7L595.3 247.8L596.8 248.3L598.4 248.0L599.9 248.0L601.4 247.3L602.9 246.9L604.5 247.1L606.0 247.5L607.5 247.1L609.0 248.2L610.6 247.8L612.1 247.9L613.6 247.9L615.1 248.0L616.7 247.7L618.2 246.9L619.7 248.2L621.2 248.1L622.8 247.7L624.3 247.8L625.8 248.0L627.4 247.0L628.9 248.1L630.4 247.3L631.9 247.0L633.5 247.3L635.0 248.1L636.5 247.2L638.0 248.1L639.6 248.5L641.1 247.7L642.6 247.7L644.2 240.0L645.8 232.2L647.4 224.5L649.0 216.7L650.6 209.0L652.2 201.2L653.8 193.5L655.4 185.7L657.0 178.0L658.5 184.6L660.0 191.1L661.5 197.7L663.0 204.2L664.5 210.8L666.0 217.4L667.5 223.9L669.0 230.5L670.5 237.1L672.0 243.6L673.5 250.2L675.0 256.8L676.5 263.3L678.0 269.9L679.5 276.4L681.0 283.0L682.5 286.3L684.0 289.7L685.5 293.3L687.0 296.7L688.5 300.0L690.0 303.4L691.5 306.3L693.0 310.0L694.5 310.0L696.0 310.0L697.5 310.0L699.0 310.0L700.5 310.0L702.0 310.0L703.5 310.0L705.0 310.0L706.5 310.0L708.0 310.0L709.5 310.0L711.0 310.0L712.5 310.0L714.0 310.0L715.5 305.6L717.0 301.2L718.5 296.7L720.0 292.3L721.5 287.9L723.0 283.5L724.5 279.0L726.0 274.6L727.5 270.2L729.0 265.8L730.5 261.3L732.0 256.9L733.5 252.5L735.0 251.9L736.6 252.0L738.1 252.8L739.7 252.1L741.2 252.4L742.7 251.5L744.3 251.6L745.8 251.9L747.4 252.5L748.9 252.5L750.4 252.4L752.0 251.8L753.5 252.1L755.1 252.0L756.6 251.9L758.1 251.4L759.7 252.6L761.2 251.4L762.8 252.6L764.3 252.5L765.8 251.0L767.4 251.7L768.9 252.2L770.5 252.4L772.0 251.6L773.5 251.3L775.1 251.1L776.6 252.3L778.2 251.1L779.7 251.5L781.2 244.4L782.8 237.3L784.3 230.3L785.8 223.2L787.4 216.1L788.9 209.0L790.5 201.9L792.0 194.8L793.5 187.8L795.1 180.7L796.6 174.0L798.1 180.1L799.7 186.7L801.2 193.2L802.7 199.7L804.3 206.3L805.8 212.8L807.3 219.3L808.9 225.9L810.4 232.4L811.9 238.9L813.5 245.5L815.0 252.0L816.5 258.5L818.1 265.1L819.6 271.6L821.2 274.0L822.8 275.9L824.4 278.5L826.0 281.1L827.6 282.7L829.2 285.6L830.8 287.6L832.4 292.1L834.0 296.9L835.5 301.2L837.1 305.3L838.7 310.0L840.3 310.0L841.9 310.0L843.5 310.0L845.1 310.0L846.7 310.0L848.3 310.0L849.9 310.0L851.5 310.0L853.1 310.0L854.7 310.0L856.3 305.8L857.8 301.6L859.4 297.3L861.0 293.1L862.6 288.9L864.1 284.7L865.7 280.5L867.3 276.3L868.9 272.0L870.4 267.8L872.0 263.6L873.5 264.2L875.0 263.6L876.5 262.8L878.1 262.8L879.6 263.6L881.1 263.5L882.6 263.3L884.1 263.0L885.6 263.4L887.2 263.3L888.7 264.1L890.2 262.8L891.7 264.0L893.2 264.1L894.7 263.0L896.3 264.3L897.8 263.9L899.3 264.2L900.8 263.3L902.3 263.4L903.8 263.4L905.4 264.4L906.9 263.7L908.4 263.4L909.9 263.5L911.4 263.2L912.9 262.9L914.5 263.0L916.0 264.1L917.5 263.3L919.0 263.6L920.6 256.5L922.2 249.4L923.8 242.4L925.4 235.3L927.0 228.2L928.6 221.1L930.2 214.0L931.8 207.0L933.4 199.9L935.0 192.8L936.6 199.9L938.2 206.9L939.8 214.0L941.4 221.1L943.0 228.1L944.6 235.2L946.2 242.2L947.8 249.3L949.4 256.5L951.0 262.7L952.6 269.6L954.2 276.6L955.8 283.1L957.4 290.1L959.0 297.0L960.6 299.5L962.2 301.6L963.8 303.7L965.4 305.8L967.0 308.2L968.6 310.0L970.2 310.0L971.7 310.0L973.3 310.0L974.8 310.0L976.4 310.0L977.9 310.0L979.5 310.0L981.0 310.0L982.6 310.0L984.1 310.0L985.7 310.0L987.2 310.0L988.8 310.0L990.3 310.0L991.9 310.0L993.4 310.0L995.0 310.0L996.5 305.1L998.0 300.1L999.5 295.2L1001.0 290.3L1002.5 285.3L1004.1 280.4L1005.6 275.4L1007.1 270.5L1008.6 265.6L1010.1 260.6L1011.6 255.7L1013.1 256.4L1014.7 255.8L1016.2 256.1L1017.8 255.1L1019.3 256.2L1020.9 255.8L1022.4 256.3L1024.0 256.1L1025.5 255.6L1027.1 255.3L1028.6 256.7L1030.1 255.4L1031.7 256.0L1033.2 255.8L1034.8 255.8L1036.3 256.5L1037.9 256.9L1039.4 255.8L1041.0 256.5L1042.5 255.9L1044.1 256.4L1045.6 256.1L1047.1 255.8L1048.7 255.8L1050.2 255.9L1051.8 257.1L1053.3 256.4L1054.9 256.0L1056.4 257.1L1058.0 257.3L1059.5 256.5L1061.1 256.0L1062.6 256.6L1064.2 249.1L1065.8 241.6L1067.4 234.2L1069.0 226.7L1070.6 219.2L1072.2 211.7L1073.8 204.3L1075.4 196.8L1077.0 189.3L1078.6 195.3L1080.2 201.4L1081.8 207.4L1083.4 213.4L1085.0 219.5L1086.5 225.5L1088.1 231.6L1089.7 237.6L1091.3 243.6L1092.9 249.7L1094.5 255.7L1096.1 260.8L1097.7 266.0L1099.2 271.5L1100.8 276.6L1102.4 282.0L1104.0 287.5L1105.6 290.1L1107.2 293.2L1108.8 296.2L1110.4 298.9L1112.0 301.5L1113.6 304.3L1115.2 307.2L1116.8 310.0L1118.4 310.0L1120.0 310.0L1121.6 310.0L1123.2 310.0L1124.8 310.0L1126.4 310.0L1128.0 310.0L1129.6 310.0L1131.2 310.0L1132.8 310.0L1134.4 310.0L1136.0 305.6L1137.6 301.2L1139.2 296.7L1140.8 292.3L1142.4 287.9L1144.0 283.5L1145.6 279.1L1147.2 274.7L1148.8 270.2L1150.4 265.8L1152.0 261.4L1153.5 261.2L1155.1 261.1L1156.6 260.6L1158.1 260.9L1159.7 262.0L1161.2 260.6L1162.7 261.2L1164.3 261.3L1165.8 261.7L1167.3 260.6L1168.9 260.7L1170.4 260.6L1171.9 260.8L1173.5 260.8L1175.0 261.6L1176.5 261.4L1178.1 261.4L1179.6 260.0L1181.1 260.0L1182.7 261.1L1184.2 261.3L1185.7 260.6L1187.3 260.8L1188.8 259.8L1190.3 260.4L1191.9 261.2L1193.4 261.0L1194.9 261.0L1196.5 261.2L1198.0 260.4L1199.5 253.1L1201.0 245.7L1202.6 238.4L1204.1 231.1L1205.6 223.8L1207.1 216.4L1208.6 209.1L1210.1 201.8L1211.7 194.5L1213.2 187.1L1214.7 179.8L1216.2 186.1L1217.8 192.5L1219.3 198.8L1220.8 205.1L1222.3 211.4L1223.8 217.8L1225.4 224.1L1226.9 230.4L1228.4 236.7L1230.0 243.1L1231.5 249.4L1233.0 255.7L1234.6 260.9L1236.2 266.2L1237.8 271.7L1239.4 277.4L1241.0 282.8L1242.6 285.7L1244.2 288.6L1245.8 291.1L1247.4 293.8L1249.0 296.6L1250.6 299.1L1252.2 301.9L1253.8 304.2L1255.4 307.5L1257.0 310.0L1258.6 310.0L1260.2 310.0L1261.8 310.0L1263.4 310.0L1265.0 310.0L1266.7 310.0L1268.3 310.0L1269.9 310.0L1271.5 310.0L1273.1 310.0L1274.7 310.0L1276.3 305.1L1277.9 300.1L1279.5 295.2L1281.1 290.3L1282.7 285.4L1284.2 280.4L1285.8 275.5L1287.4 270.6L1289.0 265.7L1290.6 260.8L1292.2 255.8L1293.8 250.9L1295.3 250.4L1296.8 251.5L1298.3 251.0L1299.8 250.4L1301.4 250.1L1302.9 250.3L1304.4 250.9L1305.9 250.9L1307.4 249.9L1308.9 249.8L1310.4 250.5L1311.9 250.6L1313.4 250.2L1314.9 249.9L1316.5 250.5L1318.0 249.5L1319.5 250.0L1321.0 250.2L1322.5 250.2" stroke="#f5aec6" stroke-width="0.75"/>
<path d="M493.3 416.7L495.0 417.7L496.6 417.2L498.3 417.8L500.0 417.2L501.7 416.8L503.4 416.9L505.0 418.5L506.7 417.7L508.2 415.4L509.8 411.8L511.3 408.5L512.8 406.7L514.3 404.3L515.9 401.0L517.4 398.0L518.9 396.0L520.4 393.8L521.9 389.7L523.5 386.5L525.0 384.4L526.5 381.8L528.0 379.6L529.6 375.8L531.1 374.3L532.6 371.4L534.1 368.2L535.7 364.9L537.2 363.6L538.7 359.6L540.2 357.8L541.8 353.9L543.3 351.7L544.8 350.7L546.4 352.8L547.9 351.2L549.5 353.7L551.0 352.1L552.5 351.0L554.1 351.2L555.6 352.0L557.1 353.0L558.7 354.2L560.2 351.2L561.8 352.2L563.3 352.7L564.8 354.9L566.3 359.7L567.8 360.5L569.3 363.1L570.8 366.1L572.3 369.8L573.8 374.0L575.3 376.9L576.8 379.4L578.3 381.7L580.0 394.5L581.6 406.3L583.3 417.2L585.0 428.9L586.6 442.2L588.3 453.3L590.0 458.5L591.6 461.7L593.3 467.6L595.0 471.7L596.7 476.4L598.3 481.0L600.0 486.0L601.5 486.0L603.0 486.0L604.6 486.0L606.1 486.0L607.6 486.0L609.1 486.0L610.6 486.0L612.1 486.0L613.7 486.0L615.2 486.0L616.7 486.0L618.2 479.7L619.7 473.7L621.2 468.5L622.7 462.9L624.2 458.3L625.8 451.1L627.3 446.9L628.8 439.9L630.3 434.4L631.8 429.6L633.3 423.3L635.0 424.5L636.6 423.0L638.3 421.6L640.0 423.2L641.7 422.8L643.4 424.9L645.0 422.1L646.7 423.3L648.2 420.3L649.7 418.6L651.3 414.1L652.8 412.1L654.3 410.2L655.8 407.3L657.4 403.1L658.9 400.4L660.4 397.7L661.9 396.6L663.4 392.5L665.0 390.8L666.5 388.3L668.0 384.4L669.5 381.6L671.0 380.2L672.6 376.7L674.1 373.3L675.6 371.4L677.1 367.9L678.7 365.1L680.2 361.8L681.7 360.0L683.2 361.0L684.7 361.6L686.2 360.5L687.7 361.7L689.2 358.2L690.8 359.0L692.3 359.9L693.8 361.7L695.3 361.7L696.8 359.6L698.3 360.0L699.9 362.0L701.5 365.1L703.1 368.0L704.7 371.8L706.3 372.5L708.0 376.8L709.6 379.3L711.2 382.1L712.8 384.7L714.4 386.9L716.0 389.3L717.5 399.8L719.1 410.6L720.6 421.5L722.1 433.1L723.6 442.6L725.2 453.6L726.7 465.0L728.2 468.5L729.7 470.5L731.2 473.1L732.8 476.1L734.3 480.1L735.8 482.7L737.3 486.0L738.9 486.0L740.4 486.0L742.0 486.0L743.5 486.0L745.1 486.0L746.6 486.0L748.2 486.0L749.8 486.0L751.3 486.0L752.9 486.0L754.4 486.0L756.0 486.0L757.6 481.0L759.1 475.0L760.7 469.3L762.3 462.2L763.9 456.0L765.4 450.2L767.0 445.1L768.6 439.6L770.2 433.3L771.7 427.1L773.3 421.7L774.8 421.6L776.4 422.6L777.9 423.0L779.4 423.6L780.9 424.2L782.5 423.7L784.0 423.3L785.5 419.8L787.0 418.5L788.5 414.7L790.0 412.5L791.6 409.4L793.1 407.4L794.6 403.6L796.1 400.9L797.6 398.2L799.1 395.3L800.6 394.0L802.1 390.7L803.6 387.5L805.2 384.9L806.7 383.3L808.2 379.6L809.7 376.3L811.2 374.8L812.7 371.7L814.2 369.7L815.7 365.2L817.3 363.2L818.8 361.1L820.3 358.4L821.8 355.9L823.3 352.3L824.8 350.5L826.4 351.4L827.9 350.7L829.4 350.9L831.0 353.8L832.5 352.3L834.0 353.6L835.6 351.4L837.1 353.2L838.6 351.6L840.2 350.8L841.7 351.7L843.2 354.9L844.7 357.9L846.2 358.2L847.7 361.9L849.2 364.5L850.7 366.0L852.2 368.9L853.7 370.8L855.2 373.4L856.7 376.7L858.4 387.4L860.0 399.1L861.7 410.3L863.4 420.6L865.0 431.3L866.7 443.3L868.4 446.5L870.0 450.8L871.7 453.4L873.3 457.2L875.0 460.6L876.6 465.3L878.3 468.3L880.0 486.0L881.6 486.0L883.2 486.0L884.8 486.0L886.4 486.0L888.0 486.0L889.6 486.0L891.2 486.0L892.8 486.0L894.4 486.0L896.0 486.0L897.6 480.2L899.1 473.5L900.7 467.7L902.3 462.4L903.9 456.9L905.4 451.2L907.0 444.3L908.6 438.6L910.2 433.7L911.7 427.4L913.3 421.7L915.0 420.9L916.6 421.0L918.3 423.4L920.0 421.0L921.7 422.0L923.4 421.2L925.0 421.4L926.7 421.7L928.2 419.5L929.7 416.9L931.3 412.7L932.8 409.5L934.3 407.7L935.8 403.7L937.4 400.4L938.9 399.3L940.4 395.4L941.9 393.3L943.4 389.6L945.0 387.7L946.5 383.9L948.0 380.4L949.5 377.2L951.0 375.4L952.6 372.7L954.1 370.3L955.6 365.8L957.1 363.9L958.7 360.5L960.2 357.9L961.7 355.0L963.2 353.8L964.8 354.5L966.3 355.5L967.8 357.2L969.3 354.2L970.9 355.8L972.4 357.1L973.9 357.9L975.4 355.1L977.0 355.0L978.5 358.2L980.0 356.7L981.5 360.8L983.0 362.3L984.5 364.0L986.0 369.1L987.5 370.6L989.0 374.7L990.5 376.8L992.0 380.2L993.5 381.3L995.0 385.0L996.7 397.7L998.3 408.9L1000.0 421.5L1001.7 434.5L1003.3 446.7L1005.0 458.3L1006.7 461.6L1008.3 465.7L1010.0 470.0L1011.7 474.2L1013.4 477.9L1015.0 481.3L1016.7 486.0L1018.3 486.0L1019.9 486.0L1021.5 486.0L1023.1 486.0L1024.7 486.0L1026.3 486.0L1028.0 486.0L1029.6 486.0L1031.2 486.0L1032.8 486.0L1034.4 486.0L1036.0 486.0L1037.5 480.1L1039.1 475.5L1040.6 470.3L1042.2 463.3L1043.7 458.8L1045.2 453.7L1046.8 446.9L1048.3 442.9L1049.8 436.2L1051.4 431.6L1052.9 426.0L1054.5 420.7L1056.0 415.0L1057.5 414.3L1059.1 414.7L1060.6 415.3L1062.2 414.7L1063.7 415.6L1065.2 414.8L1066.8 414.8L1068.3 415.0L1069.8 411.3L1071.3 409.7L1072.9 406.7L1074.4 403.5L1075.9 401.8L1077.4 399.0L1079.0 395.7L1080.5 392.3L1082.0 390.2L1083.5 386.7L1085.0 384.0L1086.6 381.8L1088.1 378.4L1089.6 376.4L1091.1 373.7L1092.6 370.0L1094.2 368.5L1095.7 364.6L1097.2 363.2L1098.7 360.5L1100.3 357.2L1101.8 353.6L1103.3 351.7L1104.8 351.7L1106.4 351.2L1107.9 353.4L1109.4 350.3L1111.0 353.1L1112.5 353.6L1114.0 352.6L1115.6 352.9L1117.1 350.5L1118.6 353.5L1120.2 351.7L1121.7 351.7L1123.3 355.8L1124.9 358.7L1126.5 359.7L1128.1 364.3L1129.6 367.6L1131.2 368.3L1132.8 372.0L1134.4 376.0L1136.0 378.3L1137.5 388.3L1139.0 400.1L1140.5 409.6L1142.0 421.1L1143.5 430.5L1145.0 441.7L1146.7 445.7L1148.3 450.4L1150.0 453.0L1151.7 457.0L1153.3 461.5L1155.0 465.0L1156.6 468.4L1158.3 473.3L1160.0 486.0L1161.6 486.0L1163.2 486.0L1164.8 486.0L1166.4 486.0L1168.0 486.0L1169.6 486.0L1171.2 486.0L1172.8 486.0L1174.4 486.0L1176.0 486.0L1177.6 479.1L1179.1 472.7L1180.7 467.8L1182.3 461.0L1183.8 455.1L1185.4 447.4L1187.0 442.2L1188.6 434.7L1190.1 429.1L1191.7 422.7L1193.4 423.3L1195.0 422.3L1196.7 424.3L1198.3 423.2L1200.0 423.4L1201.7 424.6L1203.3 421.7L1205.0 423.3L1206.5 421.3L1208.1 417.7L1209.6 414.3L1211.1 412.1L1212.6 408.1L1214.2 406.6L1215.7 402.9L1217.2 399.5L1218.8 397.4L1220.3 393.8L1221.8 390.3L1223.3 388.5L1224.9 384.2L1226.4 382.8L1227.9 378.7L1229.5 376.5L1231.0 374.3L1232.5 370.5L1234.1 367.7L1235.6 364.1L1237.1 360.5L1238.6 357.7L1240.2 354.9L1241.7 352.7L1243.2 353.1L1244.8 352.4L1246.3 352.7L1247.8 354.2L1249.3 351.3L1250.8 351.7L1252.4 353.3L1253.9 350.9L1255.4 350.8L1257.0 352.1L1258.5 351.2L1260.0 352.7L1261.5 355.3L1263.0 357.9L1264.6 361.7L1266.1 364.7L1267.6 366.6L1269.1 370.6L1270.6 373.2L1272.1 375.2L1273.7 380.3L1275.2 381.4L1276.7 385.0L1278.4 395.8L1280.0 407.0L1281.7 419.4L1283.4 431.2L1285.0 442.4L1286.7 453.3L1288.3 457.2L1289.8 461.0L1291.4 464.6L1293.0 469.9L1294.6 473.9L1296.2 477.5L1297.7 482.2L1299.3 486.0L1300.8 486.0L1302.3 486.0L1303.9 486.0L1305.4 486.0L1306.9 486.0L1308.4 486.0L1309.9 486.0L1311.4 486.0L1313.0 486.0L1314.5 486.0L1316.0 486.0L1317.9 477.6L1319.8 469.1L1321.7 460.7" stroke="#fb4f14" stroke-width="1.25" stroke-linejoin="round"/>
<path d="M493 526L516.7 526L516.7 662L533.3 662L533.3 526L656.3 526L656.3 662L673.7 662L673.7 526L795.7 526L795.7 662L813.3 662L813.3 526L935.7 526L935.7 662L953.3 662L953.3 526L1075.7 526L1075.7 662L1093.3 662L1093.3 526L1215.7 526L1215.7 662L1233.0 662L1233.0 526L1322 526" stroke="#c3d9b8" stroke-width="1"/>
<path d="M487 174H494M487 310H494" stroke="#e2669a" stroke-width="2"/><path d="M493.3 173V311" stroke="#e2669a" stroke-width="1.5"/>
<line x1="487" x2="493" y1="179" y2="179" stroke="#f3c3d7" stroke-width="1.8"/>
<line x1="487" x2="493" y1="205.4" y2="205.4" stroke="#c8095c" stroke-width="1.15"/>
<line x1="487" x2="493" y1="231.5" y2="231.5" stroke="#c8095c" stroke-width="1.15"/>
<line x1="487" x2="493" y1="257.7" y2="257.7" stroke="#c8095c" stroke-width="1.15"/>
<line x1="487" x2="493" y1="283.8" y2="283.8" stroke="#e2669a" stroke-width="1.8"/>
<path d="M487 350H493.2V486H487" stroke="#ff986e" stroke-width="1.5"/>
<line x1="487" x2="493" y1="356.5" y2="356.5" stroke="#ffc7b2" stroke-width="1.8"/>
<line x1="487" x2="493" y1="388.9" y2="388.9" stroke="#fb4c0f" stroke-width="1.15"/>
<line x1="487" x2="493" y1="421.2" y2="421.2" stroke="#fb4c0f" stroke-width="1.15"/>
<line x1="487" x2="493" y1="453.6" y2="453.6" stroke="#fb4c0f" stroke-width="1.15"/>
<path d="M487 526H493.2V662H487" stroke="#7fb562" stroke-width="1.7"/>
<path d="M493.2 670V665.7H1322.3V670" stroke="#6a6a6a" stroke-width="1.5"/>
<line x1="577.4" x2="577.4" y1="665" y2="670" stroke="#333" stroke-width="1.4"/>
<line x1="681.4" x2="681.4" y1="665" y2="670" stroke="#333" stroke-width="1.4"/>
<line x1="785.4" x2="785.4" y1="665" y2="670" stroke="#333" stroke-width="1.4"/>
<line x1="888.4" x2="888.4" y1="665" y2="670" stroke="#333" stroke-width="1.4"/>
<line x1="992.4" x2="992.4" y1="665" y2="670" stroke="#333" stroke-width="1.4"/>
<line x1="1095.4" x2="1095.4" y1="665" y2="670" stroke="#333" stroke-width="1.4"/>
<line x1="1199.4" x2="1199.4" y1="665" y2="670" stroke="#333" stroke-width="1.4"/>
<line x1="1303.4" x2="1303.4" y1="665" y2="670" stroke="#333" stroke-width="1.4"/>
<path d="M493.2 778V774.2H1322.3V778" stroke="#6a6a6a" stroke-width="1.5"/>
<line x1="540.6" x2="540.6" y1="774" y2="778" stroke="#333" stroke-width="1.4"/>
<line x1="675.5" x2="675.5" y1="774" y2="778" stroke="#333" stroke-width="1.4"/>
<line x1="814.8" x2="814.8" y1="774" y2="778" stroke="#333" stroke-width="1.4"/>
<line x1="950" x2="950" y1="774" y2="778" stroke="#333" stroke-width="1.4"/>
<line x1="1089.4" x2="1089.4" y1="774" y2="778" stroke="#333" stroke-width="1.4"/>
<line x1="1229" x2="1229" y1="774" y2="778" stroke="#333" stroke-width="1.4"/>
</svg>
<!-- resize handle -->
<div class="box" style="left:418.7px;top:437.3px;width:15.6px;height:51.5px;border-color:#e6e6e6;border-radius:3.5px"></div>
<div class="ln" style="left:419.7px;top:473px;width:13.6px;height:1px;background:#e6e6e6"></div>
<div class="abs" style="left:424px;top:444px;width:2px;height:22px;background:#cfcfcf"></div>
<div class="abs" style="left:427.1px;top:444px;width:2px;height:22px;background:#cfcfcf"></div>
<svg class="ico" style="left:423.7px;top:478.5px" width="5.6" height="5.6" viewBox="0 0 7 7" stroke="#999" stroke-width="1.1"><path d="M.4 .4L6.6 6.6M6.6 .4L.4 6.6"/></svg>


<!-- legend chips -->
<div class="box chip" style="left:492.5px;top:141px;width:87px;height:24.5px;border-color:#e8e8e8;border-radius:3px"></div>
<div class="dot" style="left:497px;top:148.4px;width:10px;height:10px;background:#c8095c"></div>
<div class="t" id="c1" style="left:511.4px;top:143.5px;font-size:10px;color:#333;letter-spacing:0.00px;transform:scaleX(0.940);transform-origin:0 50%">BA:TEMP.1</div>
<svg class="ico mv" style="left:564.3px;top:148px" width="11" height="11" viewBox="0 0 11 11" fill="none" stroke="#333" stroke-width="1"><path d="M5.5 2V9M2 5.5H9" stroke-width="1.1"/><path d="M5.5 0L7.4 2.5H3.6ZM5.5 11L7.4 8.5H3.6ZM0 5.5L2.5 3.6V7.4ZM11 5.5L8.5 3.6V7.4Z" fill="#333" stroke="none"/></svg>
<div class="box chip" style="left:583.3px;top:141px;width:89.7px;height:24.5px;border-color:#e8e8e8;border-radius:3px"></div>
<div class="dot" style="left:587.2px;top:148.4px;width:10px;height:10px;background:#244466"></div>
<div class="t" id="c2" style="left:601.7px;top:143.5px;font-size:10px;color:#333;letter-spacing:0.00px;transform:scaleX(0.954);transform-origin:0 50%">BA:CONC.1</div>
<svg class="ico mv" style="left:658.1px;top:148px" width="11" height="11" viewBox="0 0 11 11" fill="none" stroke="#333" stroke-width="1"><path d="M5.5 2V9M2 5.5H9" stroke-width="1.1"/><path d="M5.5 0L7.4 2.5H3.6ZM5.5 11L7.4 8.5H3.6ZM0 5.5L2.5 3.6V7.4ZM11 5.5L8.5 3.6V7.4Z" fill="#333" stroke="none"/></svg>
<div class="box chip" style="left:493px;top:317.4px;width:71.2px;height:25.3px;border-color:#e8e8e8;border-radius:3px"></div>
<div class="dot" style="left:497px;top:324.8px;width:10px;height:10px;background:#fb4c0f"></div>
<svg class="ico" style="left:511.7px;top:325px" width="7" height="8" viewBox="0 0 7 8"><path d="M0 0L7 4L0 8Z" fill="#1f2128"/></svg>
<div class="t" id="c3" style="left:522.6px;top:319.9px;font-size:10px;color:#333;letter-spacing:0.00px;transform:scaleX(0.929);transform-origin:0 50%">Level</div>
<svg class="ico mv" style="left:549px;top:324.5px" width="11" height="11" viewBox="0 0 11 11" fill="none" stroke="#333" stroke-width="1"><path d="M5.5 2V9M2 5.5H9" stroke-width="1.1"/><path d="M5.5 0L7.4 2.5H3.6ZM5.5 11L7.4 8.5H3.6ZM0 5.5L2.5 3.6V7.4ZM11 5.5L8.5 3.6V7.4Z" fill="#333" stroke="none"/></svg>
<div class="box chip" style="left:492.6px;top:493.8px;width:84.6px;height:24px;border-color:#e8e8e8;border-radius:3px"></div>
<div class="dot" style="left:497px;top:501px;width:10px;height:10px;background:#3a8d0b"></div>
<svg class="ico" style="left:512.4px;top:501.5px" width="6.6" height="8.6" viewBox="0 0 7 9"><path d="M7 0L0 4.5L7 9Z" fill="#1f2128"/></svg>
<div class="t" id="c4" style="left:523.7px;top:496px;font-size:10px;color:#333;letter-spacing:0.00px;transform:scaleX(0.936);transform-origin:0 50%">ACTIVE</div>
<svg class="ico mv" style="left:562px;top:500.7px" width="11" height="11" viewBox="0 0 11 11" fill="none" stroke="#333" stroke-width="1"><path d="M5.5 2V9M2 5.5H9" stroke-width="1.1"/><path d="M5.5 0L7.4 2.5H3.6ZM5.5 11L7.4 8.5H3.6ZM0 5.5L2.5 3.6V7.4ZM11 5.5L8.5 3.6V7.4Z" fill="#333" stroke="none"/></svg>

<!-- y labels -->
<div class="yl" style="left:424.3px;top:167.5px">52</div>
<div class="yl" style="left:424.3px;top:173.5px;color:#b5b5b5">50</div>
<div class="yl" style="left:424.3px;top:199.6px">40</div>
<div class="yl" style="left:424.3px;top:225.7px">30</div>
<div class="yl" style="left:424.3px;top:251.9px">20</div>
<div class="yl" style="left:424.3px;top:278px">10</div>
<div class="yl" style="left:424.3px;top:304px">0</div>
<div class="yl" style="left:424.3px;top:343.5px">42</div>
<div class="yl" style="left:424.3px;top:350.5px;color:#b5b5b5">40</div>
<div class="yl" style="left:424.3px;top:383px">30</div>
<div class="yl" style="left:424.3px;top:415.4px">20</div>
<div class="yl" style="left:424.3px;top:447.8px">10</div>
<div class="yl" style="left:424.3px;top:480px">0</div>
<div class="yl" style="left:424.3px;top:519.8px;transform:scaleX(.95);transform-origin:100% 50%">ACTIVE</div>
<div class="yl" style="left:424.3px;top:655.8px;transform:scaleX(.95);transform-origin:100% 50%">INACTIVE</div>
<!-- x labels -->
<div class="xl" style="left:547.5px;top:670.7px">03 AM</div>
<div class="xl" style="left:651px;top:670.7px">04 AM</div>
<div class="xl" style="left:755px;top:670.7px">05 AM</div>
<div class="xl" style="left:858.5px;top:670.7px">06 AM</div>
<div class="xl" style="left:962px;top:670.7px">07 AM</div>
<div class="xl" style="left:1065.5px;top:670.7px">08 AM</div>
<div class="xl" style="left:1169px;top:670.7px">09 AM</div>
<div class="xl" style="left:1273px;top:670.7px">10 AM</div>
<!-- ===== time controls ===== -->
<div class="box" style="left:493px;top:690px;width:32px;height:32px;border-radius:4px"></div>
<svg class="ico" style="left:506.8px;top:702.8px" width="4.2" height="6.6" viewBox="0 0 5 8"><path d="M5 0L0 4L5 8Z" fill="#333"/></svg>
<div class="box" style="left:529px;top:690px;width:33px;height:32px;border-radius:4px"></div>
<svg class="ico cal" style="left:538px;top:698px" width="15" height="16" viewBox="0 0 15 16" fill="none" stroke="#777" stroke-width="1"><rect x=".7" y="1.8" width="13.6" height="13.4" rx="1.2"/><path d="M.7 5.4H14.3M4.2 .4V3M10.8 .4V3"/><rect x="8.6" y="9.6" width="3.6" height="3.6" fill="#777" stroke="none"/></svg>
<div class="box" style="left:566px;top:690px;width:33px;height:32px;border-radius:4px;border-color:#c3cedd"></div>
<svg class="ico clk" style="left:575px;top:698.5px" width="15" height="15" viewBox="0 0 15 15" fill="none" stroke="#777" stroke-width="1"><circle cx="7.5" cy="7.5" r="6.7"/><path d="M7.5 3.4V7.9H11"/></svg>

<div class="box" style="left:820px;top:690px;width:32px;height:32px;border-radius:4px"></div>
<svg class="ico" style="left:827px;top:698px" width="18" height="17" viewBox="0 0 18 17" fill="none" stroke="#444" stroke-width="1"><path d="M1.5 .8V15.6H17"/><path d="M1.8 9.2C5 7.8 6.6 5.4 9.4 5C11.8 4.6 13 3.4 14.4 1.8" stroke-width="1.3"/><path d="M2 14.8L4.6 12.6H6.4L8 11.2H9.6L11.2 9.8H12.8L14.2 8.4" stroke-width=".8"/></svg>
<div class="box" style="left:856px;top:690px;width:103px;height:32px;border-radius:4px"></div>
<div class="ln" style="left:927px;top:691px;width:1px;height:30px"></div>
<div class="t" id="h8" style="left:869px;top:696.7px;font-size:14px;letter-spacing:0.00px;transform:scaleX(0.974);transform-origin:0 50%">8 hours</div>
<svg class="ico" style="left:937.5px;top:699px" width="11" height="14.6" viewBox="0 0 12 16" fill="none" stroke="#444" stroke-width="1.5"><rect x=".9" y="6.6" width="10.2" height="8.4" rx="1"/><path d="M3 6.4V4A3 3 0 0 1 9 4V4.6"/><circle cx="6" cy="10.8" r="1.1" fill="#444" stroke="none"/></svg>
<div class="box" style="left:963px;top:690px;width:32px;height:32px;border-radius:4px;border-color:#f1f1f1"></div>
<svg class="ico" style="left:972px;top:700.5px" width="14" height="13" viewBox="0 0 16 15" fill="none" stroke="#d0d0d0" stroke-width="1.2"><path d="M3.4 7.5A6 6 0 1 1 5.2 11.8"/><path d="M.8 5.6L3.4 8.2L6 5.6"/><path d="M9.4 4.2V7.8L11.8 9.2"/></svg>

<div class="box" style="left:1221px;top:690px;width:33px;height:32px;border-radius:4px"></div>
<svg class="ico cal" style="left:1230px;top:698px" width="15" height="16" viewBox="0 0 15 16" fill="none" stroke="#777" stroke-width="1"><rect x=".7" y="1.8" width="13.6" height="13.4" rx="1.2"/><path d="M.7 5.4H14.3M4.2 .4V3M10.8 .4V3"/><rect x="8.6" y="9.6" width="3.6" height="3.6" fill="#777" stroke="none"/></svg>
<div class="box" style="left:1258px;top:690px;width:64px;height:32px;border-radius:4px"></div>
<div class="abs" style="left:1258px;top:690px;width:34px;height:32px;border:1px solid #c3cedd;border-radius:4px"></div>
<svg class="ico clk" style="left:1267px;top:698.5px" width="15" height="15" viewBox="0 0 15 15" fill="none" stroke="#777" stroke-width="1"><circle cx="7.5" cy="7.5" r="6.7"/><path d="M7.5 3.4V7.9H11"/></svg>
<svg class="ico" style="left:1304px;top:702.8px" width="4.2" height="6.6" viewBox="0 0 5 8"><path d="M0 0L5 4L0 8Z" fill="#333"/></svg>

<svg class="abs" style="left:493px;top:729px" width="829" height="32" viewBox="0 0 829 32" fill="none" stroke-linejoin="round">
<path d="M0.0 4.7L2.2 27.8L4.7 5.0L7.5 29.2L10.1 5.8L13.3 29.4L15.5 2.5L18.7 28.2L20.4 7.9L23.9 28.3L26.7 2.9L28.4 28.5L30.2 3.1L32.3 29.5L34.9 4.6L38.1 28.6L40.9 5.0L43.8 28.7L46.0 8.0L49.5 27.9L52.5 3.9L54.6 29.0L56.4 6.6L58.9 27.9L61.3 7.7L64.5 29.6L66.6 7.5L69.1 27.6L71.5 2.4L74.4 28.0L76.5 2.5L78.8 27.7L81.9 2.7L84.1 29.4L85.9 6.8L87.9 28.5L90.4 3.1L93.4 29.3L96.3 2.7L98.7 29.2L100.9 7.8L104.1 29.0L107.3 3.3L109.8 27.9L112.6 2.6L116.1 29.2L118.3 6.6L120.5 29.0L122.4 2.5L125.1 29.1L127.9 4.2L130.4 27.7L133.0 5.4L136.3 29.2L138.2 7.5L141.4 29.1L143.4 6.4L146.8 29.2L150.3 7.3L153.0 28.8L154.9 2.2L158.4 29.1L161.3 3.5L164.5 28.4L166.7 3.1L169.7 29.5L171.8 5.4L175.1 28.4L177.3 7.5L179.4 29.6L181.5 4.7L183.3 29.2L185.7 5.4L187.6 28.9L190.9 7.9L193.8 28.2L196.6 2.8L198.3 29.6L201.7 6.2L205.1 29.6L208.0 4.9L211.0 29.0L214.5 2.5L217.2 28.1L220.5 6.4L223.4 28.0L226.8 4.1L229.7 27.8L233.0 4.5L236.1 27.9L238.8 5.7L241.2 28.4L244.0 2.5L246.9 27.6L250.2 6.4L252.6 28.1L255.3 4.6L258.5 29.4L261.6 2.2L264.4 28.6L266.5 6.2L269.1 28.4L272.4 3.5L274.1 29.0L277.1 3.2L279.1 27.8L282.0 4.7L285.3 28.9L288.2 3.2L290.6 28.0L294.0 7.3L296.4 28.4L298.6 2.8L301.2 27.9L304.5 6.3L307.9 29.0L309.9 4.7L312.1 29.2L314.5 5.8L317.1 29.0L320.3 7.9L322.8 29.5L324.6 7.2L326.4 28.2L329.1 3.9L332.2 29.6L334.2 4.7L335.9 27.9L338.0 2.8L339.8 28.3L342.3 5.8L345.2 28.0L348.6 6.1L350.7 28.6L352.7 2.1L355.3 28.2L357.3 3.6L359.6 28.2L362.2 5.7L365.3 28.8L368.4 7.4L370.3 27.7L373.3 2.8L375.8 28.3L379.1 4.3L381.9 27.8L385.0 7.7L387.5 28.3L389.6 6.3L392.8 28.3L395.8 3.3L399.1 27.6L402.5 5.2L405.7 29.0L409.0 7.1L411.3 29.4L413.8 5.3L416.9 28.6L418.7 6.9L420.5 28.0L422.5 4.0L425.6 29.3L427.6 5.1L430.6 27.9L433.5 7.7L436.1 27.7L438.0 3.3L440.6 29.0L443.6 5.8L446.3 27.9L449.0 3.9L451.3 27.9L454.7 3.2L457.9 27.7L460.5 5.4L462.6 28.5L465.2 5.6L467.0 27.7L469.6 4.4L472.7 28.5L475.3 6.1L477.1 28.5L479.6 7.7L482.9 29.1L485.5 2.8L488.0 28.0L491.3 4.9L493.6 29.2L496.4 7.6L498.3 28.0L500.1 3.2L502.2 28.2L504.4 4.1L507.3 29.4L510.3 2.7L512.9 29.1L514.9 5.2L517.4 28.8L519.9 5.2L521.9 29.2L524.7 5.8L527.4 27.9L530.2 7.1L532.3 28.1L535.4 7.4L537.7 29.0L541.1 3.3L544.6 27.8L546.5 3.4L549.5 29.1L551.4 7.0L553.8 28.0L555.8 4.4L558.7 29.6L560.8 6.1L564.1 27.7L566.0 5.0L569.1 28.6L572.0 3.1L573.8 29.4L575.6 5.3L578.2 28.5L580.2 3.1L582.3 27.9L585.7 7.6L587.6 29.5L591.0 4.8L594.1 28.9L596.6 5.1L599.1 28.4L600.8 6.2L604.1 29.2L606.6 6.4L609.0 29.2L611.0 5.1L612.7 27.8L615.9 6.2L619.1 28.3L621.6 5.6L624.2 27.6L627.3 3.5L630.7 28.1L633.8 6.9L636.2 27.8L639.5 6.2L642.5 28.1L645.0 6.3L646.8 28.9L649.3 2.1L651.7 28.3L654.5 3.4L657.9 28.3L660.2 6.0L662.9 28.5L665.3 8.0L668.2 28.2L671.3 7.9L673.0 28.4L676.0 3.5L678.5 29.5L680.5 4.3L682.4 29.1L685.7 5.3L688.3 27.7L691.1 8.0L693.9 28.0L695.7 5.6L698.8 29.5L702.2 3.0L704.7 29.3L707.3 5.7L709.1 27.7L711.6 5.2L714.4 28.9L716.6 5.9L719.3 29.0L722.3 3.8L724.0 29.1L725.8 2.9L728.8 28.8L732.2 6.5L733.9 27.6L737.3 2.4L740.7 28.7L743.2 7.8L745.4 28.6L748.8 6.3L751.3 27.6L754.5 5.6L756.4 28.4L758.9 3.2L760.7 28.5L762.6 4.7L765.5 28.7L767.7 5.5L770.2 28.0L772.8 8.0L776.2 28.1L778.4 2.7L781.7 28.0L784.5 4.2L786.7 28.2L789.4 5.6L792.2 28.1L794.3 3.5L797.7 27.8L801.0 2.2L802.8 29.1L805.3 5.7L807.2 28.5L809.0 2.5L811.9 28.5L814.8 4.2L817.3 29.2L819.6 6.5L822.8 29.5L824.5 6.9" stroke="#e2709c" stroke-width="0.7" opacity=".7"/>
<path d="M0.0 5.8L0.2 29.2L2.3 6.0L4.4 28.9L7.6 3.6L10.1 28.9L13.2 4.1L15.4 29.5L18.4 2.4L20.1 29.0L22.5 5.4L24.6 28.8L26.3 3.1L28.9 29.5L31.0 5.6L33.7 29.3L35.6 3.8L38.3 29.2L40.1 5.5L42.6 28.7L45.7 6.6L48.0 28.8L50.1 3.6L52.4 28.7L55.4 3.2L57.6 29.2L59.7 4.0L62.0 29.4L64.5 6.0L66.9 28.8L69.4 2.9L72.2 28.7L74.3 2.1L76.7 29.1L79.2 6.8L81.9 28.8L83.6 4.7L86.4 29.5L88.2 5.7L91.2 29.5L93.8 2.7L96.6 29.0L98.6 3.1L101.4 29.1L104.3 4.0L106.4 28.6L109.1 4.5L111.5 28.9L114.3 6.6L116.5 28.8L119.2 6.3L122.1 28.8L125.1 6.8L127.7 29.1L130.5 6.0L132.7 29.2L134.6 5.7L137.8 29.2L139.6 3.0L141.9 29.3L145.1 2.3L147.1 29.5L149.8 5.9L151.7 29.5L154.0 4.9L157.1 29.6L158.8 2.9L160.8 29.4L163.5 5.0L165.5 29.4L167.5 2.9L170.3 29.3L172.8 6.1L175.2 29.3L178.2 6.6L180.4 29.1L183.5 4.4L185.4 29.6L188.6 6.0L190.8 29.1L193.2 3.4L196.4 28.9L198.4 2.1L200.7 29.2L203.6 5.6L206.2 29.4L208.0 3.6L210.0 28.7L212.5 5.2L215.6 29.3L218.1 2.8L220.9 29.6L223.9 6.2L226.8 29.5L228.8 5.6L230.6 29.1L232.9 6.8L235.4 28.7L237.5 5.9L239.8 28.7L241.5 6.1L243.5 29.1L245.9 2.8L248.8 29.3L250.9 2.4L253.0 29.1L255.8 3.8L258.5 29.5L260.7 4.3L263.9 28.8L266.5 2.1L268.7 28.9L270.7 4.8L273.0 29.6L276.2 6.0L278.1 29.0L280.2 3.9L282.7 29.3L284.8 4.0L287.5 29.3L289.4 5.7L291.5 28.7L294.0 5.6L296.1 28.8L297.9 2.7L299.6 28.9L302.4 2.9L304.6 28.8L307.2 2.5L309.1 29.4L310.9 4.0L312.6 28.7L314.9 4.6L317.6 28.8L320.5 3.9L322.6 29.2L324.2 4.0L327.0 28.6L329.8 5.3L332.4 29.6L334.5 3.7L337.2 29.5L339.4 4.5L342.2 28.8L344.8 2.8L347.6 28.7L350.1 3.8L352.5 29.5L355.3 6.9L357.7 28.9L360.6 3.0L363.7 29.0L365.6 2.4L367.6 29.0L370.4 3.6L373.4 29.2L375.8 2.6L378.9 29.5L382.0 4.7L384.5 29.0L386.5 6.5L389.7 28.8L392.3 2.6L395.2 29.3L398.2 3.2L400.7 28.8L402.6 4.7L404.3 29.6L406.2 6.9L409.3 28.9L411.4 5.4L414.2 29.2L416.8 6.0L418.4 29.4L420.7 2.7L422.9 29.0L424.8 4.6L426.8 29.0L429.0 5.2L430.6 28.9L432.5 6.8L435.0 29.1L437.3 5.1L440.0 28.8L442.8 4.4L446.0 28.8L449.0 4.0L451.2 29.0L454.3 4.6L456.7 29.2L459.8 3.6L461.5 28.9L464.5 5.7L467.1 28.8L469.2 5.0L470.9 29.5L473.2 4.5L475.4 29.5L478.1 4.6L480.1 29.3L482.3 3.2L484.1 28.7L487.2 5.3L490.2 29.2L493.1 3.1L495.9 29.0L498.9 2.5L501.8 29.5L504.2 6.8L505.8 29.4L507.9 3.6L509.6 28.7L512.5 4.0L514.7 29.0L516.4 2.2L519.4 29.3L521.8 6.7L525.0 29.1L526.9 3.5L530.0 28.7L531.9 6.2L534.1 29.1L535.9 6.4L539.1 29.4L541.7 3.0L544.7 29.5L546.5 5.6L548.6 28.7L551.6 5.6L553.4 28.9L556.5 4.2L558.2 29.4L560.3 5.6L562.3 29.4L564.2 5.3L567.1 29.2L569.8 6.4L572.3 29.4L574.4 6.6L577.0 29.3L579.7 2.4L582.8 29.2L585.3 4.7L587.0 29.0L589.0 3.3L591.9 29.5L594.0 5.8L596.0 29.3L598.4 2.9L601.5 28.6L603.1 4.3L605.9 29.2L609.0 4.5L610.9 29.0L613.5 3.8L616.2 28.8L618.6 4.5L621.6 28.9L624.0 6.8L625.9 28.8L627.7 5.0L629.7 29.2L632.5 5.9L635.4 29.4L637.8 3.1L640.3 29.1L642.0 5.0L644.7 29.0L647.7 2.9L649.6 29.6L652.0 4.2L654.3 29.3L657.1 2.4L660.2 29.0L662.7 6.0L664.6 29.5L666.7 2.2L668.8 29.0L671.3 3.3L673.8 29.5L676.7 2.9L678.7 29.4L681.5 6.2L684.3 29.5L686.6 3.8L688.5 28.6L690.2 4.4L693.0 28.6L694.8 4.3L697.6 29.6L699.6 6.5L701.4 29.2L703.5 4.1L705.2 29.6L708.4 5.8L711.2 29.4L713.2 4.8L715.2 29.1L718.3 3.8L720.4 28.6L723.0 2.2L725.2 29.0L726.9 3.7L729.7 28.7L732.2 6.4L734.5 29.2L737.5 3.9L740.3 29.4L742.5 2.9L745.0 29.4L746.9 3.1L749.2 29.3L751.6 7.0L754.2 28.7L756.2 3.9L757.9 28.9L760.1 3.4L761.7 29.4L763.7 4.0L766.8 28.9L768.8 3.8L770.7 28.7L772.8 5.8L775.6 28.7L777.2 3.6L779.5 29.5L782.5 3.6L785.3 29.1L787.0 4.0L789.0 29.6L790.8 5.0L792.5 29.3L794.7 4.7L796.6 28.9L798.6 5.6L801.2 29.5L803.2 3.4L805.9 29.2L808.1 6.3L810.1 29.3L812.2 3.1L813.9 29.6L816.5 4.8L819.4 28.6L821.5 5.4L824.5 29.4" stroke="#6f86a8" stroke-width="0.7" opacity=".7"/>
<path d="M0.0 4.7L1.7 28.3L3.4 4.5L4.8 29.0L6.6 2.2L8.5 29.1L10.5 3.1L12.0 29.0L14.0 2.7L16.2 29.2L17.6 3.4L19.5 29.4L21.6 4.8L23.7 28.5L25.0 3.6L26.8 29.5L28.7 2.2L30.7 28.7L32.7 3.3L34.3 29.6L36.1 5.6L38.2 29.2L40.4 2.7L42.4 28.7L45.0 3.5L47.1 28.2L49.5 4.5L51.7 29.0L53.6 3.1L56.0 28.3L57.9 5.6L59.2 29.4L61.2 3.2L63.0 28.1L64.5 2.8L66.2 28.6L67.8 2.0L69.8 29.0L71.5 4.0L73.7 28.8L75.9 4.2L78.3 28.1L80.1 3.4L82.6 29.1L84.9 4.8L87.2 28.2L89.7 2.6L91.8 28.9L93.9 3.5L95.6 28.5L97.7 2.9L99.3 29.1L100.9 4.1L102.3 29.5L103.7 2.4L106.0 29.4L107.9 5.1L109.9 29.4L112.4 5.5L113.8 29.2L115.8 5.2L117.7 28.5L119.3 4.9L121.1 29.1L123.4 5.4L125.9 28.7L127.8 4.8L130.0 28.4L132.4 2.5L134.2 28.6L135.8 2.7L137.2 28.7L139.8 5.9L141.3 28.6L143.1 4.5L145.0 28.2L147.7 2.2L150.0 29.4L151.3 3.1L153.7 28.1L155.1 3.3L156.5 28.8L158.5 3.5L160.2 28.4L162.7 3.1L164.5 28.7L166.9 5.9L168.7 28.6L170.8 5.2L172.3 29.3L173.7 5.7L175.4 28.9L176.9 3.3L178.2 28.8L179.7 4.5L181.4 29.3L183.4 3.5L185.0 29.5L186.4 5.6L188.1 29.5L189.7 3.9L192.4 29.3L194.9 3.9L196.8 28.4L198.6 2.2L200.7 28.6L202.9 3.1L205.5 28.3L208.2 3.8L210.7 28.5L212.2 2.1L213.7 29.4L215.1 3.4L217.5 29.1L219.5 2.0L221.1 28.2L222.4 4.1L224.9 28.4L227.2 3.6L229.6 28.4L232.0 5.9L233.4 28.2L235.3 4.8L236.9 28.2L238.3 4.3L239.9 29.0L241.7 4.6L244.1 29.1L246.3 3.4L248.0 28.2L249.8 2.4L251.5 28.5L253.1 5.0L255.2 28.6L256.8 2.4L258.3 29.1L260.2 2.0L262.2 29.0L263.9 4.1L266.5 29.3L269.1 3.3L271.4 29.4L274.1 3.7L276.8 29.3L278.6 4.8L280.2 29.2L282.4 5.8L284.2 29.3L286.0 6.0L287.5 28.6L289.3 4.6L290.9 28.7L293.5 5.4L295.6 28.8L297.7 2.5L300.2 28.6L302.1 4.7L304.0 29.0L305.7 4.4L307.8 28.8L309.1 4.5L311.0 28.7L313.2 5.7L314.7 28.9L317.4 5.0L319.1 28.5L321.8 3.6L324.3 29.4L327.0 4.0L328.6 28.3L330.8 5.8L333.3 28.4L335.3 6.0L336.7 28.3L339.0 3.0L341.4 28.9L343.5 5.5L345.0 29.2L347.2 2.3L349.3 28.4L351.3 3.0L353.7 28.3L356.1 4.2L358.7 28.4L360.2 3.5L361.6 29.5L363.4 5.5L365.9 29.4L367.4 3.6L369.9 28.7L372.5 2.3L375.2 29.3L377.3 5.5L379.7 29.3L381.9 3.7L383.2 29.1L385.0 4.5L386.7 28.7L388.9 2.7L390.4 28.6L392.4 2.5L393.8 28.2L396.0 3.4L397.6 28.1L399.8 4.9L401.6 29.1L403.5 2.6L405.7 29.0L408.1 3.6L410.1 28.8L412.7 3.4L415.0 29.2L417.1 3.1L419.6 29.2L422.1 4.7L424.0 28.2L425.9 5.0L428.0 28.9L429.4 3.7L431.1 28.9L433.7 3.2L436.0 28.6L437.7 3.6L439.1 28.3L440.8 3.7L442.6 28.4L445.1 4.4L447.1 29.5L449.7 2.4L451.5 29.0L453.8 4.7L455.6 28.3L458.2 2.1L460.4 28.9L462.2 3.9L463.9 28.6L466.1 5.9L468.8 28.1L470.6 5.3L472.8 28.5L475.5 2.3L477.5 29.0L479.7 2.9L482.4 29.3L484.2 2.6L486.0 28.5L487.5 2.7L489.7 28.7L492.0 3.0L494.4 28.5L496.8 2.5L498.8 29.6L501.3 5.8L503.8 29.6L505.6 4.1L507.7 29.4L510.1 3.2L512.1 29.4L514.2 2.5L515.6 28.8L517.3 5.1L519.0 29.0L520.4 2.9L522.3 28.8L524.2 5.4L525.7 28.3L527.2 5.9L529.2 29.0L531.4 5.5L534.0 29.0L535.3 2.6L537.8 28.5L540.1 2.6L542.1 29.6L543.6 3.2L546.2 28.6L548.7 2.2L550.6 29.5L552.3 2.4L554.9 29.1L556.8 4.6L559.4 28.2L561.5 4.0L564.0 29.0L565.8 5.0L567.4 29.0L569.3 3.9L571.1 29.0L573.1 2.2L575.5 29.5L577.6 4.2L579.4 29.3L580.9 3.5L582.6 28.9L584.2 5.0L586.2 29.6L588.1 5.9L589.4 28.7L592.0 3.5L594.2 29.0L595.9 4.4L598.0 29.1L600.0 4.1L602.4 29.5L603.8 3.0L605.5 28.4L607.4 5.4L609.2 29.2L611.5 2.3L614.2 28.4L615.9 3.3L618.4 28.4L620.6 2.2L622.9 29.5L625.1 4.2L627.7 28.6L629.1 5.7L631.4 28.7L632.7 4.9L634.6 28.6L637.3 5.7L638.7 28.4L640.6 5.0L642.4 28.9L644.3 2.5L646.1 28.5L647.5 2.5L650.0 28.6L652.0 2.5L653.5 29.1L656.1 4.2L658.7 29.3L660.6 4.1L663.1 29.4L665.6 3.9L666.9 29.0L668.8 4.7L671.4 28.9L673.6 3.6L676.0 29.4L678.4 2.7L680.5 29.3L682.3 2.7L684.1 28.7L686.1 3.6L688.2 28.3L690.0 4.3L692.0 28.1L693.7 4.8L695.3 29.2L697.7 4.3L699.3 29.5L701.8 3.5L704.1 29.0L706.3 4.2L708.9 28.2L710.9 3.9L712.5 28.5L713.9 3.2L716.4 29.5L718.7 4.3L720.8 29.1L722.3 5.8L724.6 28.4L726.1 5.1L727.7 29.3L729.7 4.4L731.2 28.5L733.3 5.6L735.9 28.6L737.7 5.8L740.0 29.2L742.5 4.9L744.2 29.2L745.5 4.1L747.2 29.2L748.8 2.5L750.8 29.2L752.5 3.1L754.5 28.3L756.0 5.4L758.5 28.7L760.6 4.9L762.7 28.6L765.2 5.1L766.9 29.5L769.5 3.5L771.9 29.2L773.9 3.5L776.2 28.2L778.2 4.3L780.0 29.3L782.6 2.4L785.2 28.6L786.6 5.6L788.1 28.8L789.5 6.0L791.3 28.3L792.6 4.7L794.0 29.6L796.1 5.9L798.4 28.3L800.8 4.1L802.2 28.8L803.8 4.1L805.6 28.9L807.1 4.8L809.0 28.9L810.4 3.9L812.5 28.1L814.6 2.5L816.3 29.1L818.6 5.8L821.3 28.2L823.9 5.4L824.5 29.6" stroke="#ff8750" stroke-width="1.1" opacity=".9"/>
<path d="M0 29.6V2.0V2.0H3.1V29.6H4.0V2.0V2.0H7.3V29.6H8.1V2.0V2.0H11.4V29.6H12.1V2.0V2.0H15.4V29.6H16.4V2.0V29.6H18.9V2.0H19.9V29.6V29.6H22.9V2.0H23.7V29.6V29.6H27.0V2.0H27.7V29.6V2.0H30.9V29.6H31.9V2.0V2.0H34.7V29.6H35.5V2.0V2.0H38.0V29.6H39.0V2.0V2.0H42.0V29.6H42.9V2.0V2.0H46.0V29.6H46.8V2.0V2.0H50.1V29.6H50.9V2.0V2.0H53.6V29.6H54.4V2.0V2.0H57.2V29.6H58.0V2.0V2.0H60.7V29.6H61.6V2.0V2.0H64.9V29.6H65.6V2.0V2.0H68.4V29.6H69.2V2.0V2.0H72.3V29.6H73.2V2.0V2.0H75.8V29.6H76.7V2.0V2.0H79.4V29.6H80.3V2.0V2.0H83.1V29.6H83.9V2.0V2.0H87.3V29.6H88.1V2.0V2.0H91.3V29.6H92.3V2.0V2.0H95.5V29.6H96.3V2.0V2.0H99.3V29.6H100.2V2.0V2.0H103.5V29.6H104.2V2.0V2.0H107.0V29.6H107.7V2.0V2.0H110.4V29.6H111.1V2.0V2.0H114.5V29.6H115.5V2.0V2.0H118.8V29.6H119.6V2.0V2.0H122.9V29.6H123.7V2.0V2.0H126.8V29.6H127.7V2.0V2.0H131.1V29.6H131.9V2.0V2.0H134.5V29.6H135.3V2.0V2.0H137.9V29.6H138.6V2.0V2.0H141.2V29.6H142.0V2.0V2.0H144.6V29.6H145.4V2.0V2.0H148.5V29.6H149.4V2.0V2.0H152.7V29.6H153.5V2.0V2.0H156.0V29.6H156.8V2.0V2.0H160.2V29.6H161.0V2.0V2.0H163.8V29.6H164.7V2.0V2.0H167.9V29.6H168.9V2.0V2.0H171.9V29.6H172.9V2.0V2.0H175.5V29.6H176.5V2.0V2.0H179.1V29.6H180.0V2.0V2.0H182.5V29.6H183.3V2.0V2.0H186.4V29.6H187.2V2.0V29.6H189.9V2.0H190.8V29.6V29.6H193.9V2.0H194.8V29.6V29.6H197.3V2.0H198.1V29.6V2.0H200.8V29.6H201.7V2.0V2.0H204.6V29.6H205.5V2.0V2.0H208.3V29.6H209.3V2.0V2.0H212.2V29.6H213.0V2.0V2.0H215.8V29.6H216.8V2.0V2.0H220.1V29.6H221.1V2.0V2.0H223.7V29.6H224.6V2.0V2.0H227.4V29.6H228.1V2.0V2.0H230.8V29.6H231.7V2.0V2.0H235.1V29.6H235.8V2.0V29.6H239.0V2.0H239.8V29.6V29.6H242.7V2.0H243.7V29.6V29.6H246.5V2.0H247.2V29.6V29.6H250.0V2.0H250.8V29.6V29.6H253.8V2.0H254.5V29.6V29.6H257.4V2.0H258.3V29.6V29.6H261.1V2.0H261.9V29.6V2.0H265.1V29.6H265.9V2.0V2.0H269.1V29.6H269.9V2.0V2.0H272.8V29.6H273.7V2.0V2.0H277.0V29.6H277.9V2.0V2.0H280.6V29.6H281.6V2.0V2.0H284.4V29.6H285.1V2.0V2.0H288.4V29.6H289.3V2.0V2.0H292.7V29.6H293.6V2.0V2.0H296.7V29.6H297.6V2.0V2.0H300.3V29.6H301.2V2.0V2.0H304.0V29.6H304.9V2.0V29.6H307.9V2.0H308.7V29.6V29.6H311.8V2.0H312.7V29.6V29.6H315.8V2.0H316.5V29.6V29.6H319.1V2.0H320.1V29.6V29.6H322.9V2.0H323.7V29.6V29.6H326.8V2.0H327.8V29.6V29.6H330.4V2.0H331.4V29.6V2.0H334.6V29.6H335.6V2.0V2.0H338.9V29.6H339.7V2.0V2.0H342.8V29.6H343.7V2.0V2.0H346.5V29.6H347.2V2.0V2.0H350.4V29.6H351.2V2.0V2.0H354.4V29.6H355.3V2.0V2.0H358.1V29.6H358.8V2.0V2.0H361.9V29.6H362.8V2.0V2.0H365.6V29.6H366.6V2.0V2.0H369.4V29.6H370.4V2.0V2.0H373.7V29.6H374.6V2.0V2.0H377.4V29.6H378.3V2.0V2.0H380.8V29.6H381.7V2.0V2.0H384.7V29.6H385.6V2.0V2.0H388.3V29.6H389.2V2.0V2.0H391.9V29.6H392.7V2.0V29.6H395.5V2.0H396.3V29.6V29.6H399.4V2.0H400.2V29.6V29.6H403.0V2.0H403.8V29.6V29.6H406.4V2.0H407.2V29.6V29.6H410.4V2.0H411.3V29.6V29.6H414.6V2.0H415.6V29.6V29.6H418.6V2.0H419.6V29.6V29.6H422.3V2.0H423.2V29.6V2.0H425.8V29.6H426.7V2.0V2.0H429.8V29.6H430.8V2.0V2.0H433.9V29.6H434.8V2.0V2.0H437.8V29.6H438.6V2.0V2.0H441.5V29.6H442.5V2.0V2.0H445.0V29.6H445.8V2.0V2.0H448.9V29.6H449.7V2.0V2.0H452.6V29.6H453.5V2.0V2.0H456.3V29.6H457.2V2.0V2.0H460.3V29.6H461.0V2.0V2.0H463.6V29.6H464.3V2.0V2.0H466.9V29.6H467.6V2.0V2.0H470.5V29.6H471.2V2.0V2.0H474.5V29.6H475.3V2.0V2.0H478.1V29.6H479.1V2.0V2.0H481.9V29.6H482.7V2.0V2.0H485.6V29.6H486.4V2.0V2.0H489.7V29.6H490.5V2.0V2.0H493.7V29.6H494.5V2.0V2.0H497.4V29.6H498.2V2.0V2.0H501.3V29.6H502.1V2.0V2.0H505.3V29.6H506.1V2.0V2.0H509.4V29.6H510.3V2.0V2.0H513.6V29.6H514.6V2.0V2.0H517.4V29.6H518.3V2.0V2.0H521.1V29.6H522.0V2.0V2.0H525.1V29.6H526.0V2.0V2.0H529.1V29.6H529.9V2.0V2.0H532.8V29.6H533.8V2.0V2.0H537.0V29.6H537.7V2.0V2.0H540.9V29.6H541.6V2.0V2.0H544.3V29.6H545.2V2.0V2.0H547.8V29.6H548.8V2.0V29.6H551.8V2.0H552.8V29.6V29.6H555.6V2.0H556.5V29.6V29.6H559.7V2.0H560.6V29.6V29.6H563.4V2.0H564.3V29.6V29.6H567.3V2.0H568.3V29.6V29.6H571.5V2.0H572.3V29.6V29.6H575.6V2.0H576.4V29.6V29.6H579.4V2.0H580.2V29.6V29.6H583.3V2.0H584.2V29.6V29.6H587.0V2.0H587.9V29.6V29.6H590.6V2.0H591.5V29.6V29.6H594.4V2.0H595.4V29.6V29.6H598.8V2.0H599.6V29.6V29.6H602.2V2.0H603.0V29.6V29.6H606.1V2.0H607.0V29.6V29.6H609.8V2.0H610.6V29.6V29.6H613.1V2.0H613.9V29.6V29.6H616.5V2.0H617.3V29.6V29.6H620.7V2.0H621.5V29.6V29.6H624.1V2.0H624.8V29.6V29.6H628.0V2.0H628.7V29.6V29.6H631.9V2.0H632.6V29.6V29.6H635.8V2.0H636.6V29.6V29.6H639.7V2.0H640.5V29.6V29.6H643.2V2.0H644.1V29.6V29.6H647.0V2.0H647.9V29.6V29.6H651.0V2.0H652.0V29.6V29.6H654.7V2.0H655.5V29.6V29.6H658.9V2.0H659.7V29.6V29.6H662.6V2.0H663.6V29.6V29.6H666.7V2.0H667.4V29.6V29.6H670.5V2.0H671.3V29.6V29.6H674.6V2.0H675.4V29.6V29.6H678.1V2.0H679.0V29.6V2.0H682.1V29.6H682.8V2.0V2.0H685.8V29.6H686.7V2.0V29.6H689.2V2.0H690.0V29.6V29.6H693.1V2.0H694.0V29.6V2.0H696.6V29.6H697.3V2.0V2.0H700.0V29.6H700.8V2.0V2.0H703.9V29.6H704.7V2.0V2.0H707.5V29.6H708.3V2.0V2.0H711.2V29.6H711.9V2.0V2.0H714.7V29.6H715.4V2.0V2.0H718.4V29.6H719.2V2.0V2.0H722.4V29.6H723.3V2.0V2.0H726.1V29.6H727.0V2.0V2.0H730.1V29.6H731.0V2.0V2.0H733.9V29.6H734.8V2.0V2.0H737.7V29.6H738.6V2.0V2.0H741.5V29.6H742.5V2.0V2.0H745.2V29.6H745.9V2.0V2.0H748.4V29.6H749.3V2.0V2.0H752.1V29.6H752.9V2.0V2.0H756.1V29.6H757.0V2.0V2.0H760.2V29.6H761.0V2.0V2.0H764.0V29.6H765.0V2.0V2.0H768.3V29.6H769.3V2.0V29.6H772.0V2.0H773.0V29.6V29.6H775.9V2.0H776.7V29.6V29.6H779.7V2.0H780.7V29.6V2.0H784.1V29.6H784.8V2.0V2.0H787.6V29.6H788.5V2.0V2.0H791.5V29.6H792.5V2.0V2.0H795.7V29.6H796.6V2.0V2.0H799.2V29.6H800.1V2.0V2.0H803.2V29.6H804.0V2.0V2.0H806.9V29.6H807.7V2.0V2.0H810.8V29.6H811.5V2.0V2.0H814.6V29.6H815.4V2.0V29.6H818.6V2.0H819.4V29.6V29.6H822.4V2.0H823.1V29.6V29.6H824.5" stroke="#74b158" stroke-width="0.8"/>
</svg>
<div class="abs" style="left:1319.2px;top:729.6px;width:1.8px;height:42.4px;background:#111"></div>
<div class="abs" style="left:1318px;top:763px;width:3px;height:6px;background:#b5b5b5"></div>
<div class="abs" style="left:1317.3px;top:737px;width:4.6px;height:17.8px;background:#1c1c1c;border-radius:1px"></div>

<div class="xl" style="left:510px;top:778.6px">Sep</div>
<div class="xl" style="left:645.5px;top:778.6px">Oct</div>
<div class="xl" style="left:785px;top:778.6px">Nov</div>
<div class="xl" style="left:920px;top:778.6px">Dec</div>
<div class="xl" style="left:1059.5px;top:778.6px">2022</div>
<div class="xl" style="left:1199px;top:778.6px">Feb</div>

<!-- range buttons -->
<div class="box" style="left:493px;top:798.3px;width:245px;height:23.7px"></div>
<div class="abs" style="left:634px;top:799.3px;width:35px;height:21.7px;background:#eef3fa"></div>
<div class="ln" style="left:526px;top:799.3px;width:1px;height:21.7px"></div>
<div class="ln" style="left:563px;top:799.3px;width:1px;height:21.7px"></div>
<div class="ln" style="left:598px;top:799.3px;width:1px;height:21.7px"></div>
<div class="ln" style="left:633px;top:799.3px;width:1px;height:21.7px"></div>
<div class="ln" style="left:668px;top:799.3px;width:1px;height:21.7px"></div>
<div class="ln" style="left:700px;top:799.3px;width:1px;height:21.7px"></div>
<div class="rb" style="left:494px;width:32px">1D</div>
<div class="rb" style="left:527px;width:36px">1W</div>
<div class="rb" style="left:564px;width:34px">1M</div>
<div class="rb" style="left:599px;width:34px">3M</div>
<div class="rb" style="left:634px;width:34px;color:#1b5fb5">6M</div>
<div class="rb" style="left:669px;width:31px">1Y</div>
<div class="rb" style="left:701px;width:36px">ALL</div>
<div class="box" style="left:754px;top:798.3px;width:104px;height:23.7px"></div>
<div class="ln" style="left:834px;top:799.3px;width:1px;height:21.7px"></div>
<div class="rb" style="left:762.6px;text-align:left;transform:scaleX(.94);transform-origin:0 50%">CUSTOM</div>
<svg class="ico" style="left:819px;top:808px" width="8" height="4" viewBox="0 0 8 4"><path d="M0 4H8L4 0Z" fill="#999"/></svg>
<svg class="ico" style="left:840px;top:805px" width="11" height="10" viewBox="0 0 11 10" fill="none" stroke="#333" stroke-width="1"><rect x=".5" y=".5" width="10" height="9" rx="1"/><path d="M2.6 4V2.6H4M7 2.6H8.4V4M8.4 6V7.4H7M4 7.4H2.6V6" stroke-width=".9"/></svg>
</div></div>
<!-- ===== annotations ===== -->
<svg class="abs" style="left:0;top:0" width="1380" height="900" viewBox="0 0 1380 900" fill="none" stroke="#7000ff" stroke-width="2">
  <path d="M133 358L162.8 358" stroke-dasharray="11.47 3.43" stroke-dashoffset="5.74"/>
  <path d="M133 385.8L162.8 385.8" stroke-dasharray="11.47 3.43" stroke-dashoffset="5.74"/>
  <path d="M134 357L134 386.8" stroke-dasharray="11.47 3.43" stroke-dashoffset="5.74"/>
  <path d="M161.8 357L161.8 386.8" stroke-dasharray="11.47 3.43" stroke-dashoffset="5.74"/>
  <path d="M133 588L163 588" stroke-dasharray="11.55 3.45" stroke-dashoffset="5.78"/>
  <path d="M133 615.9L163 615.9" stroke-dasharray="11.55 3.45" stroke-dashoffset="5.78"/>
  <path d="M134 587L134 616.9" stroke-dasharray="11.51 3.44" stroke-dashoffset="5.76"/>
  <path d="M162 587L162 616.9" stroke-dasharray="11.51 3.44" stroke-dashoffset="5.76"/>
  <path d="M502 316L532 316" stroke-dasharray="11.55 3.45" stroke-dashoffset="5.78"/>
  <path d="M502 343.8L532 343.8" stroke-dasharray="11.55 3.45" stroke-dashoffset="5.78"/>
  <path d="M503 315L503 344.8" stroke-dasharray="11.47 3.43" stroke-dashoffset="5.74"/>
  <path d="M531 315L531 344.8" stroke-dasharray="11.47 3.43" stroke-dashoffset="5.74"/>
  <path d="M502.1 492.1L532 492.1" stroke-dasharray="11.51 3.44" stroke-dashoffset="5.76"/>
  <path d="M502.1 519.8L532 519.8" stroke-dasharray="11.51 3.44" stroke-dashoffset="5.76"/>
  <path d="M503.1 491.1L503.1 520.8" stroke-dasharray="11.43 3.42" stroke-dashoffset="5.72"/>
  <path d="M531 491.1L531 520.8" stroke-dasharray="11.43 3.42" stroke-dashoffset="5.72"/>
  <path d="M111 536L426 536" stroke-dasharray="12.13 3.62" stroke-dashoffset="6.06"/>
  <path d="M111 573.9L426 573.9" stroke-dasharray="12.13 3.62" stroke-dashoffset="6.06"/>
  <path d="M112 535L112 574.9" stroke-dasharray="10.24 3.06" stroke-dashoffset="5.12"/>
  <path d="M425 535L425 574.9" stroke-dasharray="10.24 3.06" stroke-dashoffset="5.12"/>
 <g stroke-linecap="round">
 <path d="M323.6 271.8L162.4 356.8"/><path d="M165.9 347.5L162.4 356.8L172.5 359.9"/>
 <path d="M439.6 272.4L507.9 488.3"/><path d="M499.3 483.9L507.9 488.3L512.6 479.3"/>
 <path d="M492.7 270L508 312"/><path d="M499.4 307.4L508 312L512.2 303.2"/>
 <path d="M304.4 413L268 535.6"/><path d="M263.3 526.4L268 535.6L276.3 530.3"/>
 </g>
</svg>
<div class="abs" style="left:320.4px;top:233.2px;width:240.5px;height:32px;background:#fff;border:2px solid #7000ff;border-radius:6px"></div>
<div class="t b" id="an1" style="will-change:transform;left:320.4px;top:239.5px;width:241px;text-align:center;font-size:16px;color:#7000ff;letter-spacing:0.00px;transform:scaleX(0.922);transform-origin:50% 50%">Shift icon (when enabled)</div>
<div class="abs" style="left:234px;top:381px;width:148px;height:31.8px;background:#7000ff;border-radius:5px"></div>
<div class="t b" id="an2" style="will-change:transform;left:234px;top:387.5px;width:148px;text-align:center;font-size:16px;color:#fff;letter-spacing:0.00px;transform:scaleX(0.922);transform-origin:50% 50%">Shift options</div>
</body>
</html>
